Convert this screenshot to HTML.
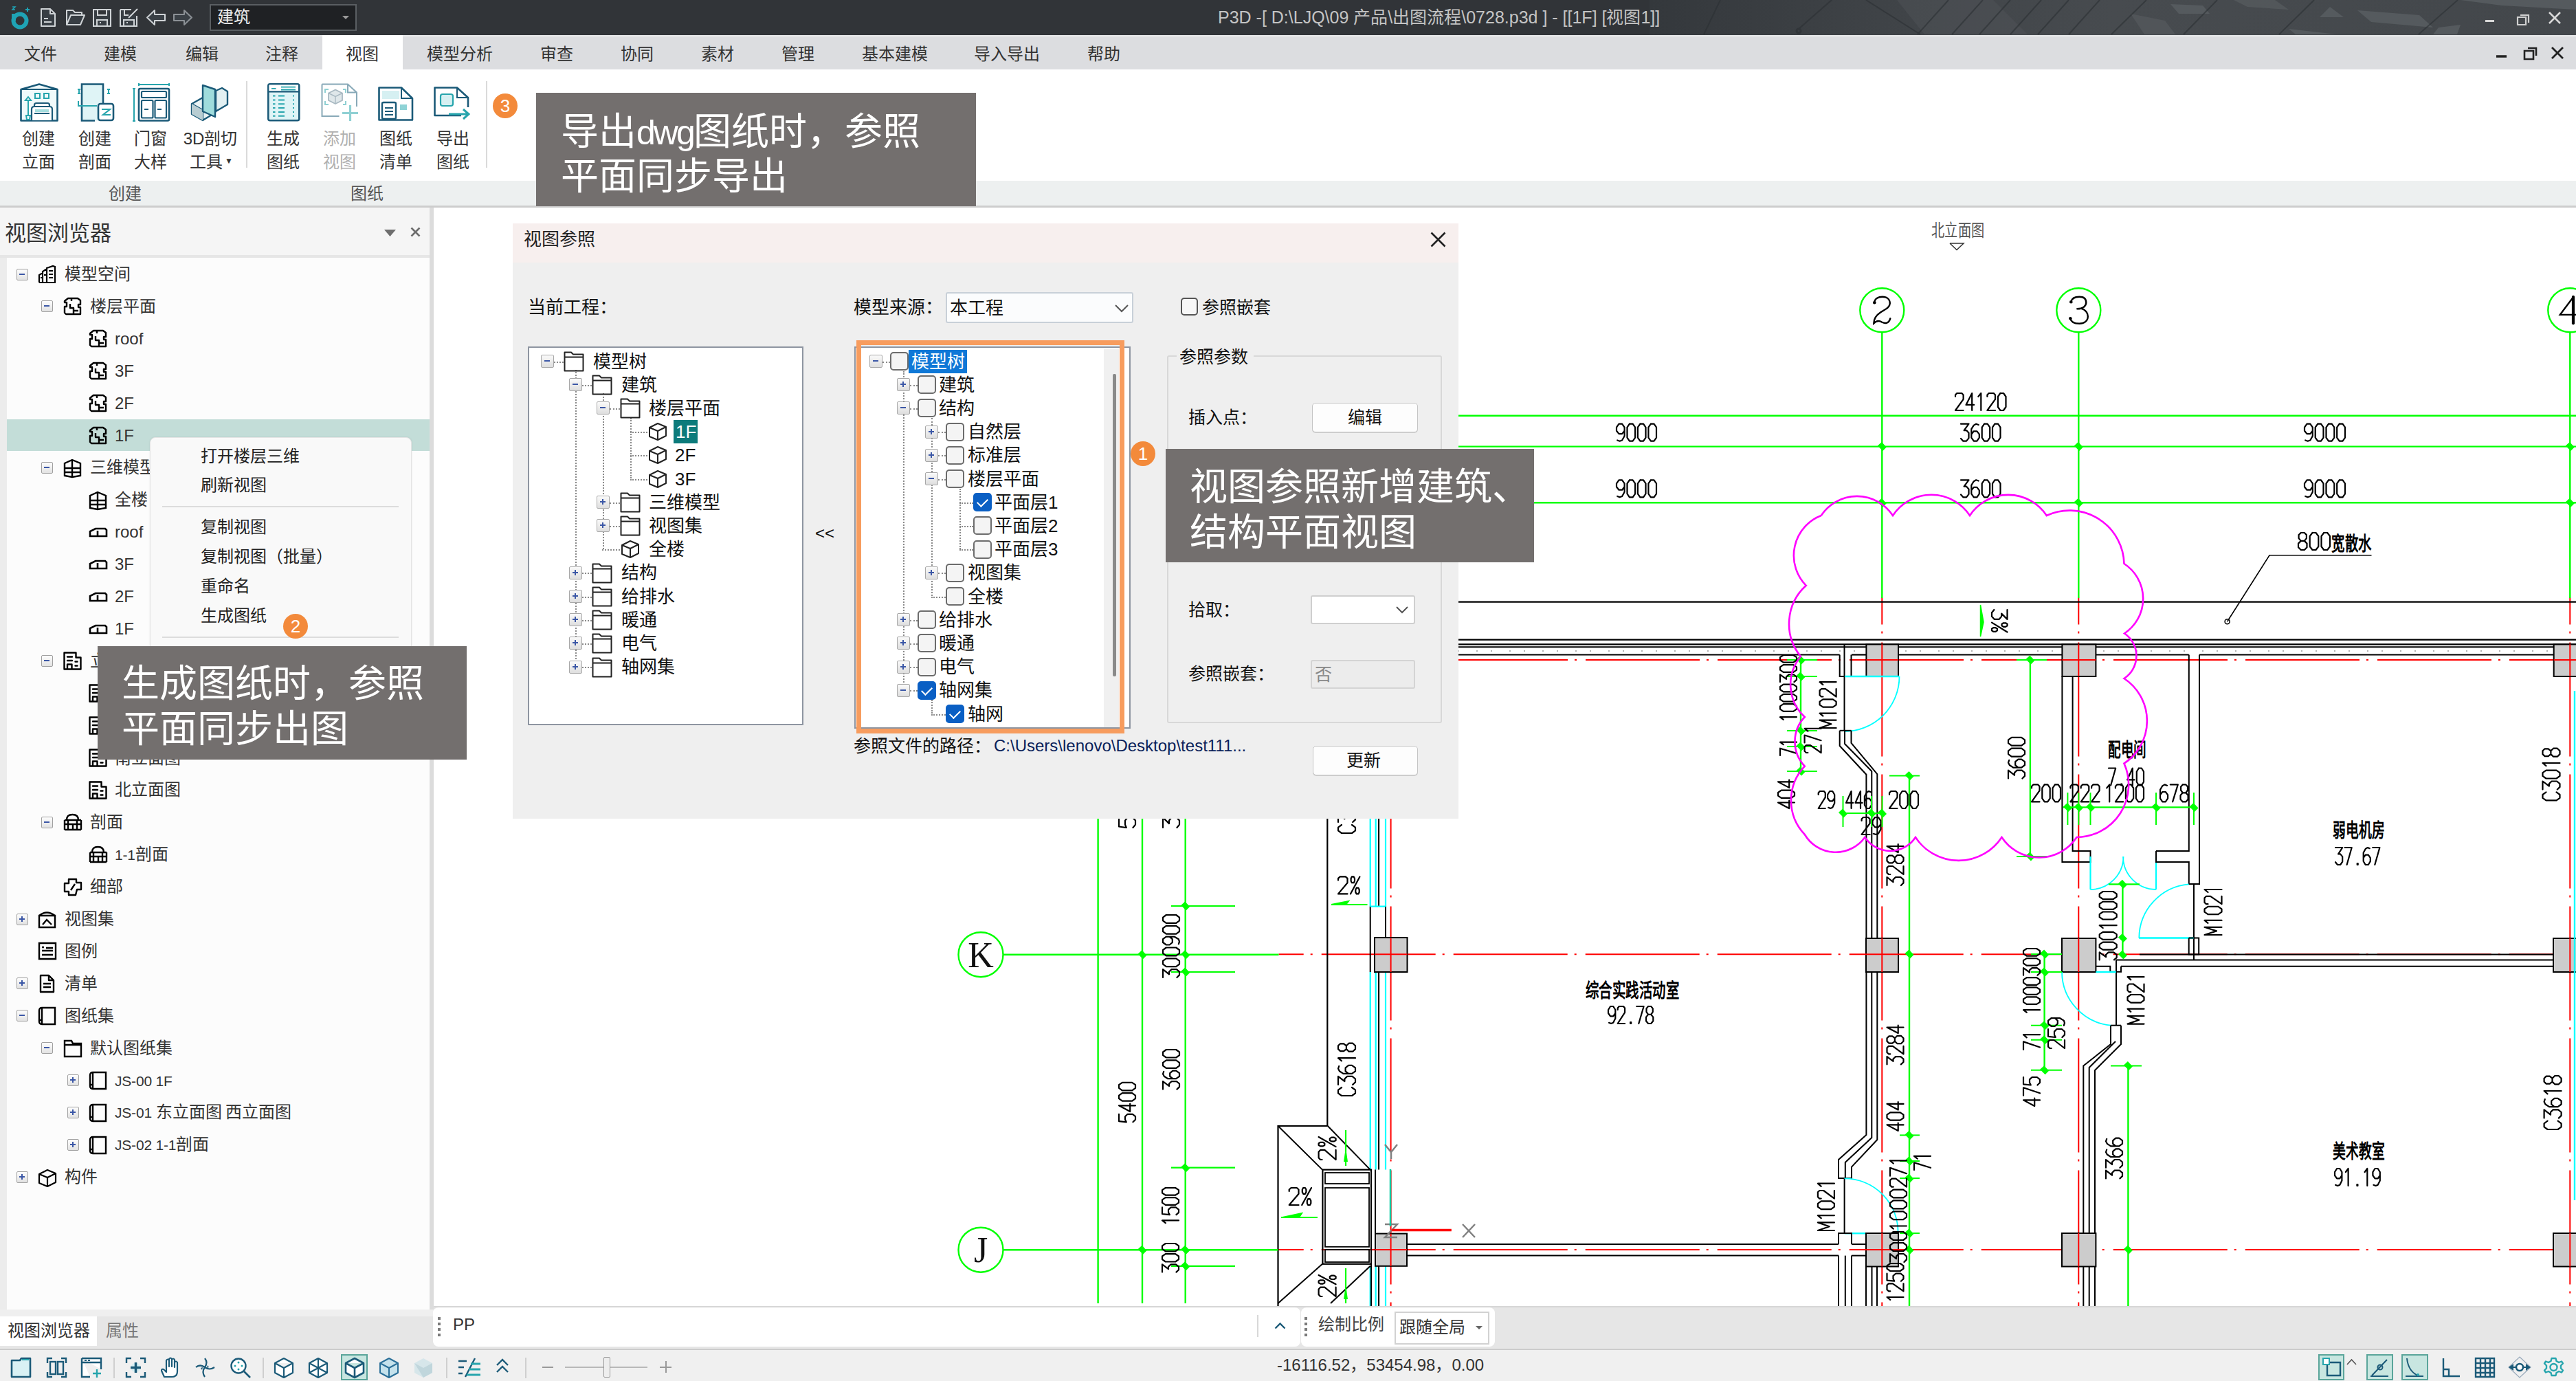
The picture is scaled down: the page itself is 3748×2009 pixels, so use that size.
<!DOCTYPE html>
<html lang="zh-CN"><head><meta charset="utf-8">
<style>
*{margin:0;padding:0;box-sizing:border-box}
html,body{width:3748px;height:2009px;overflow:hidden;background:#fff;font-family:"Liberation Sans",sans-serif;color:#333}
.a{position:absolute;white-space:nowrap}
.mi{position:absolute;font-size:24px;line-height:28px;color:#333}
.rt{position:absolute;font-size:24px;line-height:34px;color:#333;text-align:center}
.gl{position:absolute;top:266px;font-size:24px;line-height:30px;color:#555}
.tr{position:absolute;font-size:24px;line-height:30px;color:#333;white-space:nowrap}
.exp{position:absolute;width:17px;height:17px;border:1.5px solid #a0a0a0;border-radius:2px;background:linear-gradient(#fdfdfd,#e2e2e2)}
.exp:after{content:"";position:absolute;left:3px;top:6px;width:8px;height:2px;background:#3b57a6}
.exp.p:before{content:"";position:absolute;left:6px;top:3px;width:2px;height:8px;background:#3b57a6}
.box{position:absolute;background:#736f6e}
.bl{position:absolute;color:#fff;font-size:55px;line-height:67px;white-space:nowrap}
.badge{position:absolute;width:36px;height:36px;border-radius:18px;background:#f38a3b;color:#fff;font-size:26px;line-height:36px;text-align:center}
svg{position:absolute;overflow:visible}
.cm{position:absolute;font-size:24px;line-height:30px;color:#222;white-space:nowrap}
.dt{position:absolute;font-size:26px;line-height:32px;color:#111;white-space:nowrap;font-weight:500}
.cb{position:absolute;width:27px;height:27px;border:2px solid #6c6c6c;border-radius:5px;background:#f4f4f4}
.cb.on{background:#0a5fc4;border-color:#0a5fc4}
.cb.on:after{content:"";position:absolute;left:7px;top:3px;width:7px;height:13px;border-right:2px solid #fff;border-bottom:2px solid #fff;transform:rotate(45deg)}
.dexp{position:absolute;width:19px;height:19px;border:1.5px solid #a8a8a8;border-radius:2px;background:linear-gradient(#fafafa,#dedede)}
.dexp:after{content:"";position:absolute;left:4px;top:7px;width:8px;height:2px;background:#3b57a6}
.dexp.p:before{content:"";position:absolute;left:7px;top:4px;width:2px;height:8px;background:#3b57a6}
.btn{position:absolute;background:#fdfdfd;border:1.5px solid #c5c5c5;border-radius:5px;box-shadow:0 1px 0 #d0d0d0}
</style></head><body>

<div class="a" style="left:0;top:0;width:3748px;height:51px;background:#313438"></div>
<svg style="left:2400px;top:0" width="1348" height="51" viewBox="2400 0 1348 51">
<defs><linearGradient id="tg" x1="0" x2="1"><stop offset="0" stop-color="#34383c"/><stop offset="0.25" stop-color="#3f4347"/><stop offset="0.5" stop-color="#474b4f"/><stop offset="0.75" stop-color="#45494d"/><stop offset="1" stop-color="#43474b"/></linearGradient></defs>
<rect x="2400" y="0" width="1348" height="51" fill="url(#tg)"/>
<g fill="#555a5e">
<path d="M2760 0 L2900 0 L2950 50 L2800 50Z" opacity="0.35"/>
<path d="M3158 6 L3205 8 L3215 20 L3170 20Z"/>
<path d="M3375 25 L3390 10 L3410 25Z"/>
<path d="M3430 15 L3520 22 L3540 40 L3450 32Z"/>
<path d="M3580 0 L3748 0 L3748 14 L3640 8Z"/>
<path d="M3100 20 L3150 30 L3165 50 L3120 50Z" opacity="0.7"/>
<path d="M3250 0 L3310 0 L3330 14 L3270 10Z" opacity="0.8"/>
<path d="M3548 40 L3580 36 L3575 50 L3540 50Z"/>
<path d="M3330 42 L3400 50 L3340 50Z"/>
</g>
<g stroke="#2c3034" stroke-width="2" fill="none" opacity="0.6">
<path d="M2479 50 L2503 0 M2617 42 L2665 0 M2715 0 L2794 50 M2790 50 L2835 0 M2840 50 L2885 0 M2880 50 L2925 0 M2925 50 L2970 0 M2965 50 L3010 0 M3010 50 L3055 0 M3072 50 L3123 0 M3177 50 L3226 0 M3316 50 L3367 0 M3519 50 L3576 0"/>
<path d="M2617 42 a3 3 0 1 0 0.1 0" stroke-width="3"/>
</g>
</svg>
<!-- logo -->
<svg style="left:16px;top:8px" width="30" height="34" viewBox="0 0 30 34">
<circle cx="13" cy="22" r="9.5" fill="none" stroke="#1fa3b5" stroke-width="6"/>
<path d="M4 12 L4 22" stroke="#1fa3b5" stroke-width="6"/>
<path d="M2 2 h4 l-4 4 h4" stroke="#1fa3b5" stroke-width="1.5" fill="none"/>
<path d="M24 3 v6 M21 6 h6" stroke="#1fa3b5" stroke-width="2"/>
</svg>
<g></g>
<svg style="left:58px;top:11px" width="24" height="29" viewBox="0 0 24 29"><path d="M2 2 h13 l7 7 v18 h-20z M15 2 v7 h7 M6 16 h6 M6 21 h11" fill="#383e44" stroke="#cfd3d6" stroke-width="2" stroke-linejoin="round"/></svg>
<svg style="left:95px;top:13px" width="29" height="25" viewBox="0 0 29 25"><path d="M2 2 h9 l3 3 h10 v4 H8 l-6 14z M2 23 l6 -14 h20 l-6 14z" fill="#383e44" stroke="#cfd3d6" stroke-width="2" stroke-linejoin="round"/></svg>
<svg style="left:134px;top:12px" width="29" height="28" viewBox="0 0 29 28"><path d="M2 2 h25 v24 h-25z M8 2 v8 h13 v-8 M7 26 v-9 h15 v9 M11 21 h2" fill="#383e44" stroke="#cfd3d6" stroke-width="2"/></svg>
<svg style="left:173px;top:11px" width="30" height="29" viewBox="0 0 30 29"><path d="M2 3 h16 M26 12 v15 h-24 v-24 M8 3 v8 h6 M7 27 v-9 h15 v9 M11 22 h2 M14 15 l13 -13" fill="#383e44" stroke="#cfd3d6" stroke-width="2"/></svg>
<svg style="left:212px;top:13px" width="30" height="25" viewBox="0 0 30 25"><path d="M2 12.5 L13 2 v6 h15 v9 h-15 v6z" fill="#3a4046" stroke="#cfd3d6" stroke-width="2" stroke-linejoin="round"/></svg>
<svg style="left:251px;top:13px" width="30" height="25" viewBox="0 0 30 25"><path d="M28 12.5 L17 2 v6 h-15 v9 h15 v6z" fill="#3a4046" stroke="#8c9196" stroke-width="2" stroke-linejoin="round"/></svg>
<div class="a" style="left:305px;top:6px;width:214px;height:39px;background:#1f2124;border:2px solid #5a5e62"></div>
<div class="a" style="left:316px;top:9px;font-size:24px;line-height:32px;color:#eee">建筑</div>
<svg style="left:498px;top:23px" width="10" height="6"><path d="M0 0 h10 l-5 5z" fill="#9a9a9a"/></svg>
<div class="a" style="left:1772px;top:9px;font-size:25px;line-height:32px;color:#c4c4c4">P3D -[ D:\LJQ\09 产品\出图流程\0728.p3d ] - [[1F] [视图1]]</div>
<svg style="left:3610px;top:14px" width="130" height="24" viewBox="0 0 130 24">
<path d="M6 16.5 h13" stroke="#d8d8d8" stroke-width="3"/>
<path d="M57 8 h12 v11 M53 11 h12 v11 h-12z" stroke="#d0d0d0" stroke-width="2.2" fill="none"/>
<path d="M99 4 l16 16 M115 4 l-16 16" stroke="#d8d8d8" stroke-width="2.5"/>
</svg>

<div class="a" style="left:0;top:51px;width:3748px;height:50px;background:#dcdde0"></div>
<div class="a" style="left:0;top:51px;width:3748px;height:2.5px;background:#e3e4e6"></div>
<div class="a" style="left:469px;top:51px;width:117px;height:50px;background:#fff"></div>
<svg style="left:3625px;top:64px" width="120" height="26" viewBox="0 0 120 26">
<path d="M7 18 h15" stroke="#222" stroke-width="3.5"/>
<path d="M53 6 h12 v11 M48 10 h13 v12 h-13z" stroke="#222" stroke-width="2.6" fill="none"/>
<path d="M88 5 l16 16 M104 5 l-16 16" stroke="#222" stroke-width="2.8"/>
</svg>

<div class="mi" style="left:35px;top:65px">文件</div>
<div class="mi" style="left:151px;top:65px">建模</div>
<div class="mi" style="left:270px;top:65px">编辑</div>
<div class="mi" style="left:386px;top:65px">注释</div>
<div class="mi" style="left:503px;top:65px">视图</div>
<div class="mi" style="left:621px;top:65px">模型分析</div>
<div class="mi" style="left:786px;top:65px">审查</div>
<div class="mi" style="left:903px;top:65px">协同</div>
<div class="mi" style="left:1020px;top:65px">素材</div>
<div class="mi" style="left:1137px;top:65px">管理</div>
<div class="mi" style="left:1254px;top:65px">基本建模</div>
<div class="mi" style="left:1417px;top:65px">导入导出</div>
<div class="mi" style="left:1582px;top:65px">帮助</div>

<div class="a" style="left:0;top:101px;width:3748px;height:163px;background:#fff"></div>
<div class="a" style="left:0;top:263px;width:3748px;height:36px;background:#edf0f0"></div>
<div class="a" style="left:0;top:299px;width:3748px;height:3px;background:#cdcdcd"></div>
<div class="gl" style="left:158px;top:267px">创建</div>
<div class="gl" style="left:510px;top:267px">图纸</div>
<div class="a" style="left:358px;top:118px;width:2px;height:126px;background:#dadada"></div>
<div class="a" style="left:707px;top:118px;width:2px;height:126px;background:#dadada"></div>
<!-- icon1 elevation -->
<svg style="left:29px;top:121px" width="56" height="56" viewBox="0 0 56 56">
<path d="M1.5 9 L28 1.5 L54.5 9 V54.5 H1.5Z" fill="#f0fafb" stroke="#1b5a78" stroke-width="2.6" stroke-linejoin="round"/>
<path d="M1.5 9 H54.5" stroke="#1b5a78" stroke-width="2"/>
<rect x="22" y="15" width="7" height="7" fill="none" stroke="#27a5ad" stroke-width="2"/>
<rect x="35" y="15" width="7" height="7" fill="none" stroke="#27a5ad" stroke-width="2"/>
<path d="M8 25 h8 l-4 -5z M12 25 v22 M9 47 h6 l-1 6 h-4z" fill="none" stroke="#27a5ad" stroke-width="2"/>
<path d="M17 54 V38 q0 -4 4 -4 h22 q4 0 4 4 V54 M21 34 v-2 q0 -3 3 -3 h16 q3 0 3 3 v2 M21 44 h22" fill="#fff" stroke="#1b5a78" stroke-width="2.2"/>
<rect x="22" y="38" width="20" height="4" fill="#a6dede"/>
</svg>
<!-- icon2 section -->
<svg style="left:111px;top:121px" width="56" height="56" viewBox="0 0 56 56">
<rect x="8" y="1.5" width="30" height="53" fill="#dff4f6" stroke="none"/>
<path d="M39 29 V1.5 H8 V54.5 H27" fill="none" stroke="#1b5a78" stroke-width="2.6"/>
<path d="M2 9 h4 M4 9 v6 M2 15 h4 M45 9 h4 M47 9 v6 M45 15 h4 M3 26 v7 h27" fill="none" stroke="#27a5ad" stroke-width="2"/>
<rect x="32" y="30" width="22" height="24" rx="3" fill="#fff" stroke="#1b5a78" stroke-width="2.6"/>
<path d="M37 38 h12 l-10 8 h11" fill="none" stroke="#27a5ad" stroke-width="2.2"/>
</svg>
<!-- icon3 door window -->
<svg style="left:193px;top:121px" width="54" height="56" viewBox="0 0 54 56">
<path d="M9 2 h44 M9 0 v4 M53 0 v4 M2 8 v47 M0 8 h4 M0 55 h4" stroke="#27a5ad" stroke-width="2"/>
<rect x="9" y="8" width="44" height="46.5" rx="2" fill="#fff" stroke="#1b5a78" stroke-width="2.6"/>
<rect x="13" y="12" width="36" height="9" rx="1.5" fill="none" stroke="#1b5a78" stroke-width="2.2"/>
<rect x="13" y="25" width="16.5" height="25.5" rx="1.5" fill="none" stroke="#1b5a78" stroke-width="2.2"/>
<rect x="32.5" y="25" width="16.5" height="25.5" rx="1.5" fill="none" stroke="#1b5a78" stroke-width="2.2"/>
<path d="M17 38 h6 M36 38 h6" stroke="#1b5a78" stroke-width="2"/>
</svg>
<!-- icon4 3d cut -->
<svg style="left:277px;top:122px" width="56" height="56" viewBox="0 0 56 56">
<path d="M2 29 L18 20 L36 30 L36 42 L18 53 L2 44Z" fill="#e9f3f4" stroke="#1b5a78" stroke-width="2.4" stroke-linejoin="round"/>
<path d="M2 29 L18 38 L36 30 M18 38 V53" fill="none" stroke="#1b5a78" stroke-width="2.2"/>
<path d="M2 29 L18 38 L18 53 L2 44Z" fill="#b8cdd2"/>
<path d="M18 2 L36 8 V48 L18 40Z" fill="#9fdcdc" stroke="#1b5a78" stroke-width="2.4" stroke-linejoin="round"/>
<path d="M37 10 L46 6 L54 11 V30 L37 40Z" fill="#e2f0f2" stroke="#1b5a78" stroke-width="2.4" stroke-linejoin="round"/>
</svg>
<!-- icon5 generate sheet -->
<svg style="left:389px;top:121px" width="48" height="56" viewBox="389 121 48 56">
<rect x="390.3" y="122.3" width="45" height="53" rx="2.5" fill="#dff4f6" stroke="#1b5a78" stroke-width="2.6"/>
<rect x="391.6" y="123.6" width="42.4" height="9" fill="#fff"/>
<path d="M390.3 133.4 H435.3" stroke="#1b5a78" stroke-width="2.2"/>
<path d="M395 128.9 h6.5 M409 126.6 h21 M409 130.5 h21" stroke="#27a5ad" stroke-width="1.8"/>
<g stroke="#27a5ad" stroke-width="2">
<path d="M397 139.6 h3.5 M405 139.6 h9 M426 139.6 h2 M397 145.5 h3.5 M405 145.5 h9 M426 145.5 h2 M397 151.2 h3.5 M405 151.2 h9 M426 151.2 h2 M397 157.1 h3.5 M405 157.1 h9 M426 157.1 h2 M397 162.9 h3.5 M405 162.9 h9 M426 162.9 h2 M397 168.8 h3.5 M405 168.8 h9 M426 168.8 h2"/>
</g>
</svg>
<!-- icon6 add view disabled -->
<svg style="left:467px;top:121px" width="58" height="56" viewBox="467 121 58 56">
<path d="M494 190 M495 189" />
<path d="M468.5 122.5 H506 L519 134.5 V155 M493.5 169 H468.5 V122.5 M506 122.5 V134.5 H519" fill="#fff" stroke="#88a9b8" stroke-width="2"/>
<path d="M473 135 V130 H478 M499 130 H503 V135 M473 147 V152 H478 M499 152 H503 V147" fill="none" stroke="#8fd0d3" stroke-width="2"/>
<path d="M478 135.5 L488 130.5 L498 135.5 V146 L488 151 L478 146Z" fill="#dfe7ea" stroke="#a9b9c2" stroke-width="1.8"/>
<path d="M478 135.5 L488 140.5 L498 135.5 M488 140.5 V151" fill="none" stroke="#a9b9c2" stroke-width="1.4"/>
<path d="M509.5 153 v23 M498 164.5 h23" stroke="#8fd0d3" stroke-width="3.2"/>
</svg>
<!-- icon7 sheet list -->
<svg style="left:550px;top:126px" width="52" height="50" viewBox="0 0 52 50">
<path d="M1.5 1.5 H34 L50 17 V48.5 H1.5Z" fill="#fff" stroke="#1b5a78" stroke-width="2.6" stroke-linejoin="round"/>
<path d="M34 1.5 V17 H50" fill="none" stroke="#1b5a78" stroke-width="2"/>
<rect x="6" y="6" width="25" height="12" fill="#d6f0f2"/>
<rect x="6" y="23" width="20" height="24" rx="2" fill="#fff" stroke="#1b5a78" stroke-width="2.4"/>
<path d="M10 31 h12 M10 36 h12 M10 41 h12" stroke="#1b5a78" stroke-width="2"/>
<rect x="32" y="26" width="10" height="8" fill="#8fd3d6"/>
</svg>
<!-- icon8 export sheet -->
<svg style="left:631px;top:126px" width="56" height="50" viewBox="0 0 56 50">
<path d="M40 42 H1.5 V1.5 H34 L50 16 V30" fill="#fff" stroke="#1b5a78" stroke-width="2.6" stroke-linejoin="round"/>
<path d="M34 1.5 V16 H50" fill="none" stroke="#1b5a78" stroke-width="2"/>
<rect x="10" y="11" width="18" height="17" rx="3" fill="#d6f0f2" stroke="#27a5ad" stroke-width="2.2"/>
<path d="M22 40 H50 M43 33 L51 40 L43 47" fill="none" stroke="#27a5ad" stroke-width="3"/>
</svg>

<div class="rt" style="left:16px;top:185px;width:80px;">创建</div>
<div class="rt" style="left:16px;top:219px;width:80px;">立面</div>
<div class="rt" style="left:98px;top:185px;width:80px;">创建</div>
<div class="rt" style="left:98px;top:219px;width:80px;">剖面</div>
<div class="rt" style="left:179px;top:185px;width:80px;">门窗</div>
<div class="rt" style="left:179px;top:219px;width:80px;">大样</div>
<div class="rt" style="left:260px;top:185px;width:92px;">3D剖切</div>
<div class="rt" style="left:260px;top:219px;width:92px;">工具<span style="font-size:12px;position:relative;top:-6px;left:3px">▼</span></div>
<div class="rt" style="left:372px;top:185px;width:80px;">生成</div>
<div class="rt" style="left:372px;top:219px;width:80px;">图纸</div>
<div class="rt" style="left:454px;top:185px;width:80px;color:#b0b0b0;">添加</div>
<div class="rt" style="left:454px;top:219px;width:80px;color:#b0b0b0;">视图</div>
<div class="rt" style="left:536px;top:185px;width:80px;">图纸</div>
<div class="rt" style="left:536px;top:219px;width:80px;">清单</div>
<div class="rt" style="left:619px;top:185px;width:80px;">导出</div>
<div class="rt" style="left:619px;top:219px;width:80px;">图纸</div>

<div class="a" style="left:0;top:302px;width:625px;height:1603px;background:#f5f5f5"></div>
<div class="a" style="left:0;top:371px;width:625px;height:4px;background:#e6e6e6"></div>
<div class="a" style="left:7px;top:320px;font-size:31px;line-height:40px;color:#333">视图浏览器</div>
<svg style="left:559px;top:334px" width="18" height="11"><path d="M0 0 h17 l-8.5 10z" fill="#6e6e6e"/></svg>
<svg style="left:597px;top:330px" width="16" height="15"><path d="M1.5 1.5 l12 12 M13.5 1.5 l-12 12" stroke="#6e6e6e" stroke-width="2.6"/></svg>
<div class="a" style="left:0;top:375px;width:10px;height:1530px;background:#ececec"></div>
<div class="a" style="left:10px;top:375px;width:615px;height:1530px;background:#fcfcfc"></div>
<div class="a" style="left:625px;top:302px;width:6px;height:1603px;background:#dcdcdc"></div>
<div class="a" style="left:10px;top:610px;width:615px;height:46px;background:#c3ddd8"></div>

<div class="exp" style="left:24px;top:390.5px"></div>
<svg style="left:55px;top:385.5px" width="27" height="27" viewBox="0 0 27 27"><path d="M2 25 V14 L7 11 V25 M7 25 V9 L13 5 V25 M13 25 V4 L22 1 L25 2 V25 M2 25 H26 M16 8 h6 M16 13 h6 M16 18 h6 M4 18 h2 M9 14 h3" fill="none" stroke="#000" stroke-width="2.2"/></svg>
<div class="tr" style="left:94px;top:384.0px;color:#333">模型空间</div>
<div class="exp" style="left:60px;top:437.4px"></div>
<svg style="left:92px;top:432.4px" width="27" height="27" viewBox="0 0 27 27"><path d="M7 2 H21 L25 5 V11 H22 V15 H25 V25 H4 L2 23 V14 H5 V8 H2 V6 Z M10 10 v6 h5 v9 M12 2 v4 M22 20 h-6" fill="none" stroke="#000" stroke-width="2.4" stroke-linejoin="round"/></svg>
<div class="tr" style="left:131px;top:430.9px;color:#333">楼层平面</div>
<svg style="left:129px;top:479.3px" width="27" height="27" viewBox="0 0 27 27"><path d="M7 2 H21 L25 5 V11 H22 V15 H25 V25 H4 L2 23 V14 H5 V8 H2 V6 Z M10 10 v6 h5 v9 M12 2 v4 M22 20 h-6" fill="none" stroke="#000" stroke-width="2.4" stroke-linejoin="round"/></svg>
<div class="tr" style="left:167px;top:477.8px;color:#333">roof</div>
<svg style="left:129px;top:526.2px" width="27" height="27" viewBox="0 0 27 27"><path d="M7 2 H21 L25 5 V11 H22 V15 H25 V25 H4 L2 23 V14 H5 V8 H2 V6 Z M10 10 v6 h5 v9 M12 2 v4 M22 20 h-6" fill="none" stroke="#000" stroke-width="2.4" stroke-linejoin="round"/></svg>
<div class="tr" style="left:167px;top:524.7px;color:#333">3F</div>
<svg style="left:129px;top:573.1px" width="27" height="27" viewBox="0 0 27 27"><path d="M7 2 H21 L25 5 V11 H22 V15 H25 V25 H4 L2 23 V14 H5 V8 H2 V6 Z M10 10 v6 h5 v9 M12 2 v4 M22 20 h-6" fill="none" stroke="#000" stroke-width="2.4" stroke-linejoin="round"/></svg>
<div class="tr" style="left:167px;top:571.6px;color:#333">2F</div>
<svg style="left:129px;top:620.0px" width="27" height="27" viewBox="0 0 27 27"><path d="M7 2 H21 L25 5 V11 H22 V15 H25 V25 H4 L2 23 V14 H5 V8 H2 V6 Z M10 10 v6 h5 v9 M12 2 v4 M22 20 h-6" fill="none" stroke="#000" stroke-width="2.4" stroke-linejoin="round"/></svg>
<div class="tr" style="left:167px;top:618.5px;color:#333">1F</div>
<div class="exp" style="left:60px;top:671.9px"></div>
<svg style="left:92px;top:666.9px" width="27" height="27" viewBox="0 0 27 27"><path d="M2 7 L13 2 L25 7 V25 L13 27 L2 25 Z M2 14 H25 M13 2 V27 M2 20 H25" fill="none" stroke="#000" stroke-width="2.4"/></svg>
<div class="tr" style="left:131px;top:665.4px;color:#333">三维模型</div>
<svg style="left:129px;top:713.8px" width="27" height="27" viewBox="0 0 27 27"><path d="M2 7 L13 2 L25 7 V25 L13 27 L2 25 Z M2 14 H25 M13 2 V27 M2 20 H25" fill="none" stroke="#000" stroke-width="2.4"/></svg>
<div class="tr" style="left:167px;top:712.3px;color:#333">全楼</div>
<svg style="left:129px;top:767.2px" width="27" height="14" viewBox="0 0 27 14"><path d="M2 13 V6 L10 2 H24 L26 4 V13 Z M2 13 H26 M13 5 V13" fill="none" stroke="#000" stroke-width="2.6"/></svg>
<div class="tr" style="left:167px;top:759.2px;color:#333">roof</div>
<svg style="left:129px;top:814.1px" width="27" height="14" viewBox="0 0 27 14"><path d="M2 13 V6 L10 2 H24 L26 4 V13 Z M2 13 H26 M13 5 V13" fill="none" stroke="#000" stroke-width="2.6"/></svg>
<div class="tr" style="left:167px;top:806.1px;color:#333">3F</div>
<svg style="left:129px;top:861.0px" width="27" height="14" viewBox="0 0 27 14"><path d="M2 13 V6 L10 2 H24 L26 4 V13 Z M2 13 H26 M13 5 V13" fill="none" stroke="#000" stroke-width="2.6"/></svg>
<div class="tr" style="left:167px;top:853.0px;color:#333">2F</div>
<svg style="left:129px;top:907.9px" width="27" height="14" viewBox="0 0 27 14"><path d="M2 13 V6 L10 2 H24 L26 4 V13 Z M2 13 H26 M13 5 V13" fill="none" stroke="#000" stroke-width="2.6"/></svg>
<div class="tr" style="left:167px;top:899.9px;color:#333">1F</div>
<div class="exp" style="left:60px;top:953.3px"></div>
<svg style="left:92px;top:948.3px" width="27" height="27" viewBox="0 0 27 27"><path d="M1.5 1.5 H18.5 V8.5 H25.5 V25.5 H1.5 Z M6 25.5 V18.5 H12.5 V25.5" fill="none" stroke="#000" stroke-width="2.4" stroke-linejoin="round"/><path d="M6 7.5 H13 M6 13 H13 M17.5 14.5 H20.5 M17.5 20.5 H20.5" stroke="#000" stroke-width="2.4" stroke-linecap="round"/></svg>
<div class="tr" style="left:131px;top:946.8px;color:#333">立面</div>
<svg style="left:129px;top:995.2px" width="27" height="27" viewBox="0 0 27 27"><path d="M1.5 1.5 H18.5 V8.5 H25.5 V25.5 H1.5 Z M6 25.5 V18.5 H12.5 V25.5" fill="none" stroke="#000" stroke-width="2.4" stroke-linejoin="round"/><path d="M6 7.5 H13 M6 13 H13 M17.5 14.5 H20.5 M17.5 20.5 H20.5" stroke="#000" stroke-width="2.4" stroke-linecap="round"/></svg>
<div class="tr" style="left:167px;top:993.7px;color:#333">东立面图</div>
<svg style="left:129px;top:1042.1px" width="27" height="27" viewBox="0 0 27 27"><path d="M1.5 1.5 H18.5 V8.5 H25.5 V25.5 H1.5 Z M6 25.5 V18.5 H12.5 V25.5" fill="none" stroke="#000" stroke-width="2.4" stroke-linejoin="round"/><path d="M6 7.5 H13 M6 13 H13 M17.5 14.5 H20.5 M17.5 20.5 H20.5" stroke="#000" stroke-width="2.4" stroke-linecap="round"/></svg>
<div class="tr" style="left:167px;top:1040.6px;color:#333">西立面图</div>
<svg style="left:129px;top:1089.0px" width="27" height="27" viewBox="0 0 27 27"><path d="M1.5 1.5 H18.5 V8.5 H25.5 V25.5 H1.5 Z M6 25.5 V18.5 H12.5 V25.5" fill="none" stroke="#000" stroke-width="2.4" stroke-linejoin="round"/><path d="M6 7.5 H13 M6 13 H13 M17.5 14.5 H20.5 M17.5 20.5 H20.5" stroke="#000" stroke-width="2.4" stroke-linecap="round"/></svg>
<div class="tr" style="left:167px;top:1087.5px;color:#333">南立面图</div>
<svg style="left:129px;top:1135.9px" width="27" height="27" viewBox="0 0 27 27"><path d="M1.5 1.5 H18.5 V8.5 H25.5 V25.5 H1.5 Z M6 25.5 V18.5 H12.5 V25.5" fill="none" stroke="#000" stroke-width="2.4" stroke-linejoin="round"/><path d="M6 7.5 H13 M6 13 H13 M17.5 14.5 H20.5 M17.5 20.5 H20.5" stroke="#000" stroke-width="2.4" stroke-linecap="round"/></svg>
<div class="tr" style="left:167px;top:1134.4px;color:#333">北立面图</div>
<div class="exp" style="left:60px;top:1187.8px"></div>
<svg style="left:92px;top:1182.8px" width="27" height="27" viewBox="0 0 27 27"><path d="M5 10 Q5 2 13.5 2 Q22 2 22 10 M2 10 H26 M2 16 H26 M2 24 H26 M7 10 V24 M14 16 V24 M20 10 V24 M2 10 V24 M26 10 V24" fill="none" stroke="#000" stroke-width="2.4"/></svg>
<div class="tr" style="left:131px;top:1181.3px;color:#333">剖面</div>
<svg style="left:129px;top:1229.7px" width="27" height="27" viewBox="0 0 27 27"><path d="M5 10 Q5 2 13.5 2 Q22 2 22 10 M2 10 H26 M2 16 H26 M2 24 H26 M7 10 V24 M14 16 V24 M20 10 V24 M2 10 V24 M26 10 V24" fill="none" stroke="#000" stroke-width="2.4"/></svg>
<div class="tr" style="left:167px;top:1228.2px;color:#333"><span style="font-size:21px;letter-spacing:-0.2px">1-1</span>剖面</div>
<svg style="left:92px;top:1276.6px" width="27" height="27" viewBox="0 0 27 27"><path d="M8 2 H19 V7 H26 V17 L20 17 L18 25 H8 V20 H2 V8 H8 Z M11 18 L17 9" fill="none" stroke="#000" stroke-width="2.4" stroke-linejoin="round"/></svg>
<div class="tr" style="left:131px;top:1275.1px;color:#333">细部</div>
<div class="exp p" style="left:24px;top:1328.5px"></div>
<svg style="left:55px;top:1323.5px" width="27" height="27" viewBox="0 0 27 27"><path d="M2 8 Q13 -1 25 8 M2 8 H25 V25 H2 Z M7 21 L13 14 L20 21" fill="none" stroke="#000" stroke-width="2.4"/></svg>
<div class="tr" style="left:94px;top:1322.0px;color:#333">视图集</div>
<svg style="left:55px;top:1370.4px" width="27" height="27" viewBox="0 0 27 27"><path d="M2 2 H26 V25 H2 Z M6 8 H9 M12 9 H22 M6 13 H22 M6 19 H22" fill="none" stroke="#000" stroke-width="2.4"/></svg>
<div class="tr" style="left:94px;top:1368.9px;color:#333">图例</div>
<div class="exp p" style="left:24px;top:1422.3px"></div>
<svg style="left:55px;top:1417.3px" width="27" height="27" viewBox="0 0 27 27"><path d="M4 2 H16 L23 9 V26 H4 Z M16 2 V9 H23 M8 14 H19 M8 19 H19" fill="none" stroke="#000" stroke-width="2.4" stroke-linejoin="round"/></svg>
<div class="tr" style="left:94px;top:1415.8px;color:#333">清单</div>
<div class="exp" style="left:24px;top:1469.2px"></div>
<svg style="left:55px;top:1464.2px" width="27" height="27" viewBox="0 0 27 27"><path d="M6 2 H25 V26 H6 Q2 26 2 22 V6 Q2 2 6 2 Z M6 2 V26 M2 20 H6" fill="none" stroke="#000" stroke-width="2.4"/></svg>
<div class="tr" style="left:94px;top:1462.7px;color:#333">图纸集</div>
<div class="exp" style="left:60px;top:1516.1px"></div>
<svg style="left:92px;top:1511.1px" width="27" height="27" viewBox="0 0 27 27"><path d="M2 3 H12 L14 7 H26 V26 H2 Z M2 9 H26" fill="none" stroke="#000" stroke-width="2.4"/></svg>
<div class="tr" style="left:131px;top:1509.6px;color:#333">默认图纸集</div>
<div class="exp p" style="left:98px;top:1563.0px"></div>
<svg style="left:129px;top:1558.0px" width="27" height="27" viewBox="0 0 27 27"><path d="M6 2 H25 V26 H6 Q2 26 2 22 V6 Q2 2 6 2 Z M6 2 V26 M2 20 H6" fill="none" stroke="#000" stroke-width="2.4"/></svg>
<div class="tr" style="left:167px;top:1556.5px;color:#333"><span style="font-size:21px;letter-spacing:-0.2px">JS-00 1F</span></div>
<div class="exp p" style="left:98px;top:1609.9px"></div>
<svg style="left:129px;top:1604.9px" width="27" height="27" viewBox="0 0 27 27"><path d="M6 2 H25 V26 H6 Q2 26 2 22 V6 Q2 2 6 2 Z M6 2 V26 M2 20 H6" fill="none" stroke="#000" stroke-width="2.4"/></svg>
<div class="tr" style="left:167px;top:1603.4px;color:#333"><span style="font-size:21px;letter-spacing:-0.2px">JS-01 </span>东立面图<span style="font-size:21px;letter-spacing:-0.2px"> </span>西立面图</div>
<div class="exp p" style="left:98px;top:1656.8px"></div>
<svg style="left:129px;top:1651.8px" width="27" height="27" viewBox="0 0 27 27"><path d="M6 2 H25 V26 H6 Q2 26 2 22 V6 Q2 2 6 2 Z M6 2 V26 M2 20 H6" fill="none" stroke="#000" stroke-width="2.4"/></svg>
<div class="tr" style="left:167px;top:1650.3px;color:#333"><span style="font-size:21px;letter-spacing:-0.2px">JS-02 1-1</span>剖面</div>
<div class="exp p" style="left:24px;top:1703.7px"></div>
<svg style="left:55px;top:1698.7px" width="27" height="27" viewBox="0 0 27 27"><path d="M2 9 L14 3 L26 8 V21 L14 27 L2 22 Z M2 9 L14 14 L26 8 M14 14 V27" fill="none" stroke="#000" stroke-width="2.2" stroke-linejoin="round"/></svg>
<div class="tr" style="left:94px;top:1697.2px;color:#333">构件</div>

<div class="a" style="left:218px;top:636px;width:381px;height:320px;background:#f9f9f9;border:1px solid #e4e4e4;border-radius:8px;box-shadow:0 0 3px rgba(0,0,0,0.08)"></div>
<div class="a" style="left:236px;top:736px;width:344px;height:2px;background:#dcdcdc"></div>
<div class="a" style="left:236px;top:926px;width:344px;height:2px;background:#dcdcdc"></div>

<div class="cm" style="left:292px;top:649px">打开楼层三维</div>
<div class="cm" style="left:292px;top:691px">刷新视图</div>
<div class="cm" style="left:292px;top:752px">复制视图</div>
<div class="cm" style="left:292px;top:795px">复制视图（批量）</div>
<div class="cm" style="left:292px;top:838px">重命名</div>
<div class="cm" style="left:292px;top:881px">生成图纸</div>
<div class="a" style="left:631px;top:302px;width:3117px;height:1599px;background:#fff"></div>
<svg style="left:0;top:0" width="3748" height="2009" viewBox="0 0 3748 2009" font-family="Liberation Sans, sans-serif"><defs><clipPath id="cv"><rect x="631" y="302" width="3117" height="1599"/></clipPath></defs><g clip-path="url(#cv)"><line x1="2100" y1="604.7" x2="3748" y2="604.7" stroke="#00ff00" stroke-width="2.4"/><line x1="2100" y1="649.6" x2="3748" y2="649.6" stroke="#00ff00" stroke-width="2.4"/><line x1="2100" y1="731.3" x2="3748" y2="731.3" stroke="#00ff00" stroke-width="2.4"/><line x1="2738.3" y1="483" x2="2738.3" y2="870" stroke="#00ff00" stroke-width="2.4"/><line x1="2738.3" y1="870" x2="2738.3" y2="1901" stroke="#ff0000" stroke-width="2" stroke-dasharray="166 10 3 13" stroke-dashoffset="127.4"/><path d="M2737.8,643.1 L2744.8,650.6 L2739.3,656.1 L2731.8,648.6Z" fill="#00ff00"/><path d="M2737.8,724.8 L2744.8,732.3 L2739.3,737.8 L2731.8,730.3Z" fill="#00ff00"/><line x1="3024.3" y1="483" x2="3024.3" y2="870" stroke="#00ff00" stroke-width="2.4"/><line x1="3024.3" y1="870" x2="3024.3" y2="1901" stroke="#ff0000" stroke-width="2" stroke-dasharray="166 10 3 13" stroke-dashoffset="127.4"/><path d="M3023.8,643.1 L3030.8,650.6 L3025.3,656.1 L3017.8,648.6Z" fill="#00ff00"/><path d="M3023.8,724.8 L3030.8,732.3 L3025.3,737.8 L3017.8,730.3Z" fill="#00ff00"/><line x1="3739.3" y1="483" x2="3739.3" y2="870" stroke="#00ff00" stroke-width="2.4"/><line x1="3739.3" y1="870" x2="3739.3" y2="1901" stroke="#ff0000" stroke-width="2" stroke-dasharray="166 10 3 13" stroke-dashoffset="127.4"/><path d="M3738.8,643.1 L3745.8,650.6 L3740.3,656.1 L3732.8,648.6Z" fill="#00ff00"/><path d="M3738.8,724.8 L3745.8,732.3 L3740.3,737.8 L3732.8,730.3Z" fill="#00ff00"/><circle cx="2738.3" cy="451.3" r="32" fill="none" stroke="#00ff00" stroke-width="2.4"/><g transform="translate(2738.3,451.3)"><path d="M-11,-11 C-11,-17 -5,-19.5 0.5,-19.5 C7,-19.5 11.5,-16 11.5,-10 C11.5,-4 4,-1 -2,3 C-8,7 -12,12 -12,19 C-8,15 -4,15 0,17.5 C5,20 10,19 12,12" fill="none" stroke="#000" stroke-width="2.4" stroke-linecap="round"/><circle cx="-11" cy="-11" r="2.3"/></g><circle cx="3024.3" cy="451.3" r="32" fill="none" stroke="#00ff00" stroke-width="2.4"/><g transform="translate(3024.3,451.3)"><path d="M-11,-12 C-10,-17 -5,-19.5 1,-19.5 C8,-19.5 11,-16 11,-11 C11,-6 6,-2 -2,-2 M4,-2.5 C10,-1 13.5,4 13.5,9 C13.5,16 8,19.5 1,19.5 C-6,19.5 -11,17 -12,12" fill="none" stroke="#000" stroke-width="2.4" stroke-linecap="round"/><circle cx="-11" cy="-12" r="2.3"/><circle cx="-12" cy="12" r="2.3"/></g><circle cx="3739.3" cy="451.3" r="32" fill="none" stroke="#00ff00" stroke-width="2.4"/><g transform="translate(3739.3,451.3)"><path d="M4.7,-19 L-14.5,6.6 H14" fill="none" stroke="#000" stroke-width="2.4" stroke-linecap="round"/><path d="M4.7,-19.5 V19" stroke="#000" stroke-width="4.2" stroke-linecap="round"/></g><text x="2810" y="344" font-size="25" fill="#555" textLength="77" lengthAdjust="spacingAndGlyphs">北立面图</text><polyline points="2837,354 2857,354 2847,363.5 2837,354" fill="none" stroke="#333" stroke-width="1.5"/><path d="M2845.0,577.0 L2845.0,574.5 L2847.3,572.0 L2854.3,572.0 L2856.6,574.5 L2856.6,580.8 L2845.0,597.0 L2856.6,597.0 M2869.2,597.0 L2869.2,572.0 L2860.5,588.9 L2872.1,588.9 M2878.3,577.0 L2882.3,572.0 L2882.3,597.0 M2891.4,577.0 L2891.4,574.5 L2893.7,572.0 L2900.7,572.0 L2903.0,574.5 L2903.0,580.8 L2891.4,597.0 L2903.0,597.0 M2910.4,572.0 L2915.0,572.0 L2918.5,577.0 L2918.5,592.0 L2915.0,597.0 L2910.4,597.0 L2906.9,592.0 L2906.9,577.0 L2910.4,572.0" fill="none" stroke="#000" stroke-width="2.2" stroke-linejoin="round" stroke-linecap="round"/><path d="M2363.6,626.7 L2360.1,631.1 L2355.5,631.1 L2352.0,626.7 L2352.0,621.7 L2355.5,616.7 L2360.1,616.7 L2363.6,621.7 L2363.6,634.2 L2360.1,640.5 L2356.6,641.7 L2353.2,640.5 M2370.9,616.7 L2375.6,616.7 L2379.1,621.7 L2379.1,636.7 L2375.6,641.7 L2370.9,641.7 L2367.5,636.7 L2367.5,621.7 L2370.9,616.7 M2386.4,616.7 L2391.1,616.7 L2394.5,621.7 L2394.5,636.7 L2391.1,641.7 L2386.4,641.7 L2382.9,636.7 L2382.9,621.7 L2386.4,616.7 M2401.9,616.7 L2406.5,616.7 L2410.0,621.7 L2410.0,636.7 L2406.5,641.7 L2401.9,641.7 L2398.4,636.7 L2398.4,621.7 L2401.9,616.7" fill="none" stroke="#000" stroke-width="2.2" stroke-linejoin="round" stroke-linecap="round"/><path d="M2853.0,616.7 L2864.5,616.7 L2857.6,626.1 L2861.1,626.1 L2864.5,629.8 L2864.5,637.3 L2861.1,641.7 L2856.4,641.7 L2853.0,638.0 M2878.7,618.0 L2875.2,616.7 L2871.8,618.6 L2868.3,624.2 L2868.3,636.7 L2871.8,641.7 L2876.4,641.7 L2879.8,636.7 L2879.8,631.7 L2876.4,627.3 L2871.8,627.3 L2868.3,631.7 M2887.1,616.7 L2891.7,616.7 L2895.2,621.7 L2895.2,636.7 L2891.7,641.7 L2887.1,641.7 L2883.7,636.7 L2883.7,621.7 L2887.1,616.7 M2902.4,616.7 L2907.1,616.7 L2910.5,621.7 L2910.5,636.7 L2907.1,641.7 L2902.4,641.7 L2899.0,636.7 L2899.0,621.7 L2902.4,616.7" fill="none" stroke="#000" stroke-width="2.2" stroke-linejoin="round" stroke-linecap="round"/><path d="M3364.8,626.7 L3361.3,631.1 L3356.5,631.1 L3353.0,626.7 L3353.0,621.7 L3356.5,616.7 L3361.3,616.7 L3364.8,621.7 L3364.8,634.2 L3361.3,640.5 L3357.7,641.7 L3354.2,640.5 M3372.3,616.7 L3377.0,616.7 L3380.5,621.7 L3380.5,636.7 L3377.0,641.7 L3372.3,641.7 L3368.7,636.7 L3368.7,621.7 L3372.3,616.7 M3388.0,616.7 L3392.7,616.7 L3396.3,621.7 L3396.3,636.7 L3392.7,641.7 L3388.0,641.7 L3384.5,636.7 L3384.5,621.7 L3388.0,616.7 M3403.7,616.7 L3408.5,616.7 L3412.0,621.7 L3412.0,636.7 L3408.5,641.7 L3403.7,641.7 L3400.2,636.7 L3400.2,621.7 L3403.7,616.7" fill="none" stroke="#000" stroke-width="2.2" stroke-linejoin="round" stroke-linecap="round"/><path d="M2363.6,708.3 L2360.1,712.7 L2355.5,712.7 L2352.0,708.3 L2352.0,703.3 L2355.5,698.3 L2360.1,698.3 L2363.6,703.3 L2363.6,715.8 L2360.1,722.0 L2356.6,723.3 L2353.2,722.0 M2370.9,698.3 L2375.6,698.3 L2379.1,703.3 L2379.1,718.3 L2375.6,723.3 L2370.9,723.3 L2367.5,718.3 L2367.5,703.3 L2370.9,698.3 M2386.4,698.3 L2391.1,698.3 L2394.5,703.3 L2394.5,718.3 L2391.1,723.3 L2386.4,723.3 L2382.9,718.3 L2382.9,703.3 L2386.4,698.3 M2401.9,698.3 L2406.5,698.3 L2410.0,703.3 L2410.0,718.3 L2406.5,723.3 L2401.9,723.3 L2398.4,718.3 L2398.4,703.3 L2401.9,698.3" fill="none" stroke="#000" stroke-width="2.2" stroke-linejoin="round" stroke-linecap="round"/><path d="M2853.0,698.3 L2864.5,698.3 L2857.6,707.7 L2861.1,707.7 L2864.5,711.4 L2864.5,718.9 L2861.1,723.3 L2856.4,723.3 L2853.0,719.5 M2878.7,699.5 L2875.2,698.3 L2871.8,700.2 L2868.3,705.8 L2868.3,718.3 L2871.8,723.3 L2876.4,723.3 L2879.8,718.3 L2879.8,713.3 L2876.4,708.9 L2871.8,708.9 L2868.3,713.3 M2887.1,698.3 L2891.7,698.3 L2895.2,703.3 L2895.2,718.3 L2891.7,723.3 L2887.1,723.3 L2883.7,718.3 L2883.7,703.3 L2887.1,698.3 M2902.4,698.3 L2907.1,698.3 L2910.5,703.3 L2910.5,718.3 L2907.1,723.3 L2902.4,723.3 L2899.0,718.3 L2899.0,703.3 L2902.4,698.3" fill="none" stroke="#000" stroke-width="2.2" stroke-linejoin="round" stroke-linecap="round"/><path d="M3364.8,708.3 L3361.3,712.7 L3356.5,712.7 L3353.0,708.3 L3353.0,703.3 L3356.5,698.3 L3361.3,698.3 L3364.8,703.3 L3364.8,715.8 L3361.3,722.0 L3357.7,723.3 L3354.2,722.0 M3372.3,698.3 L3377.0,698.3 L3380.5,703.3 L3380.5,718.3 L3377.0,723.3 L3372.3,723.3 L3368.7,718.3 L3368.7,703.3 L3372.3,698.3 M3388.0,698.3 L3392.7,698.3 L3396.3,703.3 L3396.3,718.3 L3392.7,723.3 L3388.0,723.3 L3384.5,718.3 L3384.5,703.3 L3388.0,698.3 M3403.7,698.3 L3408.5,698.3 L3412.0,703.3 L3412.0,718.3 L3408.5,723.3 L3403.7,723.3 L3400.2,718.3 L3400.2,703.3 L3403.7,698.3" fill="none" stroke="#000" stroke-width="2.2" stroke-linejoin="round" stroke-linecap="round"/><path d="M3347.8,775.0 L3352.8,775.0 L3355.9,778.1 L3355.9,783.1 L3352.8,786.9 L3347.8,786.9 L3344.6,783.1 L3344.6,778.1 L3347.8,775.0 M3347.8,786.9 L3344.0,790.6 L3344.0,796.2 L3347.8,800.0 L3352.8,800.0 L3356.5,796.2 L3356.5,790.6 L3352.8,786.9 M3364.5,775.0 L3369.5,775.0 L3373.3,780.0 L3373.3,795.0 L3369.5,800.0 L3364.5,800.0 L3360.7,795.0 L3360.7,780.0 L3364.5,775.0 M3381.2,775.0 L3386.2,775.0 L3390.0,780.0 L3390.0,795.0 L3386.2,800.0 L3381.2,800.0 L3377.5,795.0 L3377.5,780.0 L3381.2,775.0" fill="none" stroke="#000" stroke-width="2.2" stroke-linejoin="round" stroke-linecap="round"/><text x="3392" y="801" font-size="28.9" font-weight="bold" fill="#000" textLength="58.5" lengthAdjust="spacingAndGlyphs">宽散水</text><polyline points="3450.5,807.7 3302,807.7 3240.6,904.3" fill="none" stroke="#000000" stroke-width="1.6"/><circle cx="3240.6" cy="904.3" r="3.5" fill="none" stroke="#000" stroke-width="1.5"/><line x1="2100" y1="875.7" x2="3748" y2="875.7" stroke="#000000" stroke-width="2.2"/><line x1="2100" y1="930.6" x2="3748" y2="930.6" stroke="#000000" stroke-width="2.2"/><line x1="2100" y1="937.4" x2="3748" y2="937.4" stroke="#000000" stroke-width="2.2"/><line x1="2100" y1="941.2" x2="3748" y2="941.2" stroke="#000000" stroke-width="2"/><line x1="2100" y1="947" x2="3748" y2="947" stroke="#999" stroke-width="1.5" stroke-dasharray="2 19 2 25"/><line x1="2100" y1="952.5" x2="2676.7" y2="952.5" stroke="#000000" stroke-width="2.2"/><line x1="2694" y1="952.5" x2="2715.4" y2="952.5" stroke="#000000" stroke-width="2.2"/><line x1="2762" y1="952.5" x2="3000.4" y2="952.5" stroke="#000000" stroke-width="2.2"/><line x1="3049.4" y1="952.5" x2="3184.8" y2="952.5" stroke="#000000" stroke-width="2.2"/><line x1="3200" y1="952.5" x2="3715.7" y2="952.5" stroke="#000000" stroke-width="2.2"/><line x1="2100" y1="960" x2="3748" y2="960" stroke="#ff0000" stroke-width="2" stroke-dasharray="166 10 3 13" stroke-dashoffset="177"/><path d="M2881.5,926 V880 L2886,905 Z" fill="#00ff00" stroke="#00ff00" stroke-width="1.5"/><path d="M2920.5,887.0 L2920.5,900.9 L2912.1,892.6 L2912.1,896.8 L2908.7,900.9 L2901.9,900.9 L2898.0,896.8 L2898.0,891.2 L2901.4,887.0 M2898.0,905.6 L2920.5,919.5 M2920.5,907.7 L2920.5,910.4 L2918.2,911.8 L2914.9,911.8 L2912.6,910.4 L2912.6,907.7 L2914.9,906.3 L2918.2,906.3 L2920.5,907.7 M2905.9,914.6 L2905.9,917.4 L2903.6,918.8 L2900.2,918.8 L2898.0,917.4 L2898.0,914.6 L2900.2,913.2 L2903.6,913.2 L2905.9,914.6" fill="none" stroke="#000" stroke-width="2.2" stroke-linejoin="round" stroke-linecap="round"/><rect x="2715.4" y="937.4" width="46.59999999999991" height="46.60000000000002" fill="#cccccc" stroke="#000" stroke-width="2"/><rect x="3000.4" y="937.4" width="49.0" height="46.60000000000002" fill="#cccccc" stroke="#000" stroke-width="2"/><rect x="3715.7" y="937.4" width="54.30000000000018" height="46.60000000000002" fill="#cccccc" stroke="#000" stroke-width="2"/><line x1="2738.3" y1="937.4" x2="2738.3" y2="984" stroke="#ff0000" stroke-width="2"/><line x1="3024.3" y1="937.4" x2="3024.3" y2="984" stroke="#ff0000" stroke-width="2"/><line x1="3739.3" y1="937.4" x2="3739.3" y2="984" stroke="#ff0000" stroke-width="2"/><line x1="2715.4" y1="960" x2="2762" y2="960" stroke="#ff0000" stroke-width="2"/><line x1="3000.4" y1="960" x2="3049.4" y2="960" stroke="#ff0000" stroke-width="2"/><line x1="3715.7" y1="960" x2="3748" y2="960" stroke="#ff0000" stroke-width="2"/><polyline points="2676.7,952.5 2676.7,984 2693.5,984 2693.5,952.5" fill="none" stroke="#000000" stroke-width="2"/><line x1="2683.5" y1="937.4" x2="2683.5" y2="1062.8" stroke="#000000" stroke-width="2"/><line x1="2684" y1="984" x2="2763" y2="984" stroke="#00ffff" stroke-width="2.4"/><path d="M2763.5,984 A80,80 0 0 1 2683.5,1064" fill="none" stroke="#00ffff" stroke-width="1.8"/><polyline points="2676.7,1062.8 2693.5,1062.8" fill="none" stroke="#000000" stroke-width="2"/><polyline points="2676.7,1062.8 2676.7,1085 2715.4,1126.7 2715.4,1651 2675,1687 2675,1714 2694,1714 2694,1697.6 2731.3,1658 2731.3,1126 2693.5,1081 2693.5,1062.8" fill="none" stroke="#000000" stroke-width="2"/><polyline points="2684,1062.8 2684,1082 2723.3,1122 2723.3,1655 2684.8,1691 2684.8,1714" fill="none" stroke="#000000" stroke-width="2"/><line x1="2683.6" y1="1714" x2="2683.6" y2="1794" stroke="#000000" stroke-width="2"/><path d="M2683.6,1714.4 A78,78 0 0 1 2761.6,1794.2" fill="none" stroke="#00ffff" stroke-width="1.8"/><line x1="2683.6" y1="1794.2" x2="2715" y2="1794.2" stroke="#00ffff" stroke-width="2.4"/><polyline points="2675,1810 2675,1794 2694,1794 2694,1810" fill="none" stroke="#000000" stroke-width="2"/><rect x="2715" y="1365" width="47" height="49" fill="#cccccc" stroke="#000" stroke-width="2"/><rect x="2715" y="1794" width="47" height="48.5" fill="#cccccc" stroke="#000" stroke-width="2"/><line x1="2738.3" y1="1365" x2="2738.3" y2="1414" stroke="#ff0000" stroke-width="2"/><line x1="2738.3" y1="1794" x2="2738.3" y2="1842.5" stroke="#ff0000" stroke-width="2"/><line x1="1859.5" y1="1818" x2="3748" y2="1818" stroke="#ff0000" stroke-width="2" stroke-dasharray="166 10 3 13" stroke-dashoffset="128.8"/><line x1="1860.5" y1="1388.3" x2="3748" y2="1388.3" stroke="#ff0000" stroke-width="2" stroke-dasharray="166 10 3 13" stroke-dashoffset="129.8"/><line x1="2047" y1="1810" x2="2675" y2="1810" stroke="#000000" stroke-width="2"/><line x1="2047" y1="1826.6" x2="2675" y2="1826.6" stroke="#000000" stroke-width="2"/><line x1="2694" y1="1810" x2="2715" y2="1810" stroke="#000000" stroke-width="2"/><line x1="2694" y1="1826.6" x2="2715" y2="1826.6" stroke="#000000" stroke-width="2"/><line x1="2675" y1="1826.6" x2="2675" y2="1901" stroke="#000000" stroke-width="2"/><line x1="2684.8" y1="1826.6" x2="2684.8" y2="1901" stroke="#000000" stroke-width="2"/><line x1="2694" y1="1826.6" x2="2694" y2="1901" stroke="#000000" stroke-width="2"/><line x1="2715" y1="1842.5" x2="2715" y2="1901" stroke="#000000" stroke-width="2"/><line x1="2723.5" y1="1842.5" x2="2723.5" y2="1901" stroke="#000000" stroke-width="2"/><line x1="2731" y1="1842.5" x2="2731" y2="1901" stroke="#000000" stroke-width="2"/><line x1="2778" y1="1128.5" x2="2778" y2="1901" stroke="#00ff00" stroke-width="2.4"/><line x1="2749" y1="1128.5" x2="2793" y2="1128.5" stroke="#00ff00" stroke-width="2.2"/><path d="M2777.5,1122.0 L2784.5,1129.5 L2779,1135.0 L2771.5,1127.5Z" fill="#00ff00"/><path d="M2777.5,1381.5 L2784.5,1389 L2779,1394.5 L2771.5,1387Z" fill="#00ff00"/><path d="M2777.5,1644.9 L2784.5,1652.4 L2779,1657.9 L2771.5,1650.4Z" fill="#00ff00"/><path d="M2777.5,1682.5 L2784.5,1690 L2779,1695.5 L2771.5,1688Z" fill="#00ff00"/><path d="M2777.5,1707.5 L2784.5,1715 L2779,1720.5 L2771.5,1713Z" fill="#00ff00"/><path d="M2777.5,1787.5 L2784.5,1795 L2779,1800.5 L2771.5,1793Z" fill="#00ff00"/><path d="M2777.5,1811.5 L2784.5,1819 L2779,1824.5 L2771.5,1817Z" fill="#00ff00"/><line x1="2764" y1="1651.4" x2="2793" y2="1651.4" stroke="#00ff00" stroke-width="2"/><line x1="2764" y1="1689" x2="2793" y2="1689" stroke="#00ff00" stroke-width="2"/><line x1="2764" y1="1714" x2="2793" y2="1714" stroke="#00ff00" stroke-width="2"/><line x1="2764" y1="1794" x2="2793" y2="1794" stroke="#00ff00" stroke-width="2"/><path d="M2745.5,1288.0 L2745.5,1276.0 L2754.5,1283.2 L2754.5,1279.6 L2758.1,1276.0 L2765.3,1276.0 L2769.5,1279.6 L2769.5,1284.4 L2765.9,1288.0 M2750.3,1272.0 L2747.9,1272.0 L2745.5,1269.6 L2745.5,1262.4 L2747.9,1260.0 L2753.9,1260.0 L2769.5,1272.0 L2769.5,1260.0 M2745.5,1252.4 L2745.5,1247.6 L2748.5,1244.6 L2753.3,1244.6 L2756.9,1247.6 L2756.9,1252.4 L2753.3,1255.4 L2748.5,1255.4 L2745.5,1252.4 M2756.9,1252.4 L2760.5,1256.0 L2765.9,1256.0 L2769.5,1252.4 L2769.5,1247.6 L2765.9,1244.0 L2760.5,1244.0 L2756.9,1247.6 M2769.5,1231.0 L2745.5,1231.0 L2761.7,1240.0 L2761.7,1228.0" fill="none" stroke="#000" stroke-width="2.2" stroke-linejoin="round" stroke-linecap="round"/><path d="M2745.5,1548.4 L2745.5,1537.1 L2754.5,1543.9 L2754.5,1540.5 L2758.1,1537.1 L2765.3,1537.1 L2769.5,1540.5 L2769.5,1545.0 L2765.9,1548.4 M2750.3,1533.3 L2747.9,1533.3 L2745.5,1531.0 L2745.5,1524.2 L2747.9,1521.9 L2753.9,1521.9 L2769.5,1533.3 L2769.5,1521.9 M2745.5,1514.8 L2745.5,1510.2 L2748.5,1507.4 L2753.3,1507.4 L2756.9,1510.2 L2756.9,1514.8 L2753.3,1517.6 L2748.5,1517.6 L2745.5,1514.8 M2756.9,1514.8 L2760.5,1518.2 L2765.9,1518.2 L2769.5,1514.8 L2769.5,1510.2 L2765.9,1506.8 L2760.5,1506.8 L2756.9,1510.2 M2769.5,1494.5 L2745.5,1494.5 L2761.7,1503.0 L2761.7,1491.7" fill="none" stroke="#000" stroke-width="2.2" stroke-linejoin="round" stroke-linecap="round"/><path d="M2769.5,1636.4 L2745.5,1636.4 L2761.7,1645.0 L2761.7,1633.5 M2745.5,1626.3 L2745.5,1621.7 L2750.3,1618.3 L2764.7,1618.3 L2769.5,1621.7 L2769.5,1626.3 L2764.7,1629.7 L2750.3,1629.7 L2745.5,1626.3 M2769.5,1605.9 L2745.5,1605.9 L2761.7,1614.5 L2761.7,1603.0" fill="none" stroke="#000" stroke-width="2.2" stroke-linejoin="round" stroke-linecap="round"/><path d="M2754.8,1787.6 L2750.0,1783.5 L2774.0,1783.5 M2750.0,1770.6 L2750.0,1765.8 L2754.8,1762.3 L2769.2,1762.3 L2774.0,1765.8 L2774.0,1770.6 L2769.2,1774.1 L2754.8,1774.1 L2750.0,1770.6 M2750.0,1754.7 L2750.0,1750.0 L2754.8,1746.4 L2769.2,1746.4 L2774.0,1750.0 L2774.0,1754.7 L2769.2,1758.3 L2754.8,1758.3 L2750.0,1754.7 M2750.0,1738.9 L2750.0,1734.1 L2754.8,1730.6 L2769.2,1730.6 L2774.0,1734.1 L2774.0,1738.9 L2769.2,1742.4 L2754.8,1742.4 L2750.0,1738.9 M2754.8,1726.6 L2752.4,1726.6 L2750.0,1724.2 L2750.0,1717.1 L2752.4,1714.7 L2758.4,1714.7 L2774.0,1726.6 L2774.0,1714.7 M2750.0,1710.7 L2750.0,1698.9 L2774.0,1707.2 M2754.8,1692.5 L2750.0,1688.3 L2774.0,1688.3" fill="none" stroke="#000" stroke-width="2.2" stroke-linejoin="round" stroke-linecap="round"/><path d="M2785.0,1702.0 L2785.0,1691.3 L2809.0,1698.8 M2789.8,1685.6 L2785.0,1681.8 L2809.0,1681.8" fill="none" stroke="#000" stroke-width="2.2" stroke-linejoin="round" stroke-linecap="round"/><path d="M2750.0,1836.0 L2750.0,1824.0 L2759.0,1831.2 L2759.0,1827.6 L2762.6,1824.0 L2769.8,1824.0 L2774.0,1827.6 L2774.0,1832.4 L2770.4,1836.0 M2750.0,1816.4 L2750.0,1811.6 L2754.8,1808.0 L2769.2,1808.0 L2774.0,1811.6 L2774.0,1816.4 L2769.2,1820.0 L2754.8,1820.0 L2750.0,1816.4 M2750.0,1800.4 L2750.0,1795.6 L2754.8,1792.0 L2769.2,1792.0 L2774.0,1795.6 L2774.0,1800.4 L2769.2,1804.0 L2754.8,1804.0 L2750.0,1800.4" fill="none" stroke="#000" stroke-width="2.2" stroke-linejoin="round" stroke-linecap="round"/><path d="M2750.3,1890.8 L2745.5,1887.0 L2769.5,1887.0 M2750.3,1878.3 L2747.9,1878.3 L2745.5,1876.1 L2745.5,1869.5 L2747.9,1867.3 L2753.9,1867.3 L2769.5,1878.3 L2769.5,1867.3 M2745.5,1852.7 L2745.5,1862.6 L2756.3,1863.7 L2754.5,1860.4 L2754.5,1856.0 L2758.1,1852.7 L2765.3,1852.7 L2769.5,1856.0 L2769.5,1860.4 L2765.9,1863.7 M2745.5,1845.7 L2745.5,1841.3 L2750.3,1838.0 L2764.7,1838.0 L2769.5,1841.3 L2769.5,1845.7 L2764.7,1849.0 L2750.3,1849.0 L2745.5,1845.7" fill="none" stroke="#000" stroke-width="2.2" stroke-linejoin="round" stroke-linecap="round"/><path d="M2668.9,1790.0 L2644.9,1790.0 L2661.7,1784.2 L2644.9,1778.4 L2668.9,1778.4 M2649.7,1772.2 L2644.9,1768.1 L2668.9,1768.1 M2644.9,1755.6 L2644.9,1750.9 L2649.7,1747.4 L2664.1,1747.4 L2668.9,1750.9 L2668.9,1755.6 L2664.1,1759.1 L2649.7,1759.1 L2644.9,1755.6 M2649.7,1743.6 L2647.3,1743.6 L2644.9,1741.3 L2644.9,1734.3 L2647.3,1732.0 L2653.3,1732.0 L2668.9,1743.6 L2668.9,1732.0 M2649.7,1725.8 L2644.9,1721.7 L2668.9,1721.7" fill="none" stroke="#000" stroke-width="2.2" stroke-linejoin="round" stroke-linecap="round"/><line x1="2620" y1="960" x2="2620" y2="1122" stroke="#00ff00" stroke-width="2.4"/><path d="M2619.5,953.5 L2626.5,961 L2621,966.5 L2613.5,959Z" fill="#00ff00"/><line x1="2600" y1="960" x2="2644" y2="960" stroke="#00ff00" stroke-width="2"/><path d="M2619.5,977.5 L2626.5,985 L2621,990.5 L2613.5,983Z" fill="#00ff00"/><line x1="2600" y1="984" x2="2644" y2="984" stroke="#00ff00" stroke-width="2"/><path d="M2619.5,1056.5 L2626.5,1064 L2621,1069.5 L2613.5,1062Z" fill="#00ff00"/><line x1="2600" y1="1063" x2="2644" y2="1063" stroke="#00ff00" stroke-width="2"/><path d="M2619.5,1079.5 L2626.5,1087 L2621,1092.5 L2613.5,1085Z" fill="#00ff00"/><line x1="2600" y1="1086" x2="2644" y2="1086" stroke="#00ff00" stroke-width="2"/><path d="M2619.5,1115.5 L2626.5,1123 L2621,1128.5 L2613.5,1121Z" fill="#00ff00"/><line x1="2600" y1="1122" x2="2644" y2="1122" stroke="#00ff00" stroke-width="2"/><path d="M2594.8,1046.9 L2590.0,1043.1 L2614.0,1043.1 M2590.0,1031.6 L2590.0,1027.3 L2594.8,1024.1 L2609.2,1024.1 L2614.0,1027.3 L2614.0,1031.6 L2609.2,1034.8 L2594.8,1034.8 L2590.0,1031.6 M2590.0,1017.4 L2590.0,1013.1 L2594.8,1009.9 L2609.2,1009.9 L2614.0,1013.1 L2614.0,1017.4 L2609.2,1020.6 L2594.8,1020.6 L2590.0,1017.4 M2590.0,1003.1 L2590.0,998.9 L2594.8,995.7 L2609.2,995.7 L2614.0,998.9 L2614.0,1003.1 L2609.2,1006.3 L2594.8,1006.3 L2590.0,1003.1 M2590.0,992.1 L2590.0,981.4 L2599.0,987.8 L2599.0,984.6 L2602.6,981.4 L2609.8,981.4 L2614.0,984.6 L2614.0,988.9 L2610.4,992.1 M2590.0,974.7 L2590.0,970.4 L2594.8,967.2 L2609.2,967.2 L2614.0,970.4 L2614.0,974.7 L2609.2,977.9 L2594.8,977.9 L2590.0,974.7 M2590.0,960.5 L2590.0,956.2 L2594.8,953.0 L2609.2,953.0 L2614.0,956.2 L2614.0,960.5 L2609.2,963.7 L2594.8,963.7 L2590.0,960.5" fill="none" stroke="#000" stroke-width="2.2" stroke-linejoin="round" stroke-linecap="round"/><path d="M2590.0,1099.0 L2590.0,1088.7 L2614.0,1095.9 M2594.8,1083.2 L2590.0,1079.6 L2614.0,1079.6" fill="none" stroke="#000" stroke-width="2.2" stroke-linejoin="round" stroke-linecap="round"/><path d="M2611.0,1167.5 L2587.0,1167.5 L2603.2,1176.0 L2603.2,1164.7 M2587.0,1157.6 L2587.0,1153.0 L2591.8,1149.7 L2606.2,1149.7 L2611.0,1153.0 L2611.0,1157.6 L2606.2,1160.9 L2591.8,1160.9 L2587.0,1157.6 M2611.0,1137.4 L2587.0,1137.4 L2603.2,1145.9 L2603.2,1134.6" fill="none" stroke="#000" stroke-width="2.2" stroke-linejoin="round" stroke-linecap="round"/><path d="M2630.4,1095.0 L2628.0,1095.0 L2625.6,1092.8 L2625.6,1086.3 L2628.0,1084.1 L2634.0,1084.1 L2649.6,1095.0 L2649.6,1084.1 M2625.6,1080.5 L2625.6,1069.5 L2649.6,1077.2 M2630.4,1063.7 L2625.6,1059.9 L2649.6,1059.9" fill="none" stroke="#000" stroke-width="2.2" stroke-linejoin="round" stroke-linecap="round"/><path d="M2671.6,1059.0 L2647.6,1059.0 L2664.4,1053.3 L2647.6,1047.6 L2671.6,1047.6 M2652.4,1041.6 L2647.6,1037.6 L2671.6,1037.6 M2647.6,1025.3 L2647.6,1020.7 L2652.4,1017.3 L2666.8,1017.3 L2671.6,1020.7 L2671.6,1025.3 L2666.8,1028.7 L2652.4,1028.7 L2647.6,1025.3 M2652.4,1013.5 L2650.0,1013.5 L2647.6,1011.3 L2647.6,1004.4 L2650.0,1002.2 L2656.0,1002.2 L2671.6,1013.5 L2671.6,1002.2 M2652.4,996.1 L2647.6,992.1 L2671.6,992.1" fill="none" stroke="#000" stroke-width="2.2" stroke-linejoin="round" stroke-linecap="round"/><path d="M2645.7,1156.0 L2645.7,1153.5 L2647.7,1151.0 L2653.8,1151.0 L2655.8,1153.5 L2655.8,1159.8 L2645.7,1176.0 L2655.8,1176.0 M2669.2,1161.0 L2666.2,1165.4 L2662.2,1165.4 L2659.1,1161.0 L2659.1,1156.0 L2662.2,1151.0 L2666.2,1151.0 L2669.2,1156.0 L2669.2,1168.5 L2666.2,1174.8 L2663.2,1176.0 L2660.2,1174.8 M2693.6,1176.0 L2693.6,1151.0 L2686.0,1167.9 L2696.1,1167.9 M2707.0,1176.0 L2707.0,1151.0 L2699.5,1167.9 L2709.6,1167.9 M2722.0,1152.2 L2719.0,1151.0 L2715.9,1152.9 L2712.9,1158.5 L2712.9,1171.0 L2715.9,1176.0 L2720.0,1176.0 L2723.0,1171.0 L2723.0,1166.0 L2720.0,1161.6 L2715.9,1161.6 L2712.9,1166.0" fill="none" stroke="#000" stroke-width="2.2" stroke-linejoin="round" stroke-linecap="round"/><path d="M2749.0,1156.0 L2749.0,1153.5 L2751.3,1151.0 L2758.2,1151.0 L2760.5,1153.5 L2760.5,1159.8 L2749.0,1176.0 L2760.5,1176.0 M2767.7,1151.0 L2772.3,1151.0 L2775.7,1156.0 L2775.7,1171.0 L2772.3,1176.0 L2767.7,1176.0 L2764.3,1171.0 L2764.3,1156.0 L2767.7,1151.0 M2783.0,1151.0 L2787.6,1151.0 L2791.0,1156.0 L2791.0,1171.0 L2787.6,1176.0 L2783.0,1176.0 L2779.5,1171.0 L2779.5,1156.0 L2783.0,1151.0" fill="none" stroke="#000" stroke-width="2.2" stroke-linejoin="round" stroke-linecap="round"/><path d="M2708.6,1194.0 L2708.6,1191.5 L2711.0,1189.0 L2718.2,1189.0 L2720.6,1191.5 L2720.6,1197.8 L2708.6,1214.0 L2720.6,1214.0 M2736.5,1199.0 L2732.9,1203.4 L2728.1,1203.4 L2724.5,1199.0 L2724.5,1194.0 L2728.1,1189.0 L2732.9,1189.0 L2736.5,1194.0 L2736.5,1206.5 L2732.9,1212.8 L2729.3,1214.0 L2725.7,1212.8" fill="none" stroke="#000" stroke-width="2.2" stroke-linejoin="round" stroke-linecap="round"/><line x1="2681.5" y1="1183" x2="2743" y2="1183" stroke="#00ff00" stroke-width="2.2"/><line x1="2681.5" y1="1158" x2="2681.5" y2="1203" stroke="#00ff00" stroke-width="2"/><path d="M2681.0,1176.5 L2688.0,1184 L2682.5,1189.5 L2675.0,1182Z" fill="#00ff00"/><line x1="2723" y1="1158" x2="2723" y2="1203" stroke="#00ff00" stroke-width="2"/><path d="M2722.5,1176.5 L2729.5,1184 L2724,1189.5 L2716.5,1182Z" fill="#00ff00"/><line x1="2738.5" y1="1158" x2="2738.5" y2="1203" stroke="#00ff00" stroke-width="2"/><path d="M2738.0,1176.5 L2745.0,1184 L2739.5,1189.5 L2732.0,1182Z" fill="#00ff00"/><polyline points="3000.4,984 3000.4,1254 3041.5,1254 3041.5,1238 3015.6,1238 3015.6,984" fill="none" stroke="#000000" stroke-width="2"/><line x1="3041.5" y1="1246" x2="3041.5" y2="1294" stroke="#00ffff" stroke-width="2.2"/><line x1="3137" y1="1246" x2="3137" y2="1294" stroke="#00ffff" stroke-width="2.2"/><path d="M3041.5,1294 A48,48 0 0 0 3089.5,1246 M3137,1294 A48,48 0 0 1 3089,1246" fill="none" stroke="#00ffff" stroke-width="1.8"/><polyline points="3137,1238 3184.8,1238 3184.8,952.5" fill="none" stroke="#000000" stroke-width="2"/><polyline points="3137,1238 3137,1254 3184.8,1254 3184.8,1285.9 3200,1285.9 3200,952.5" fill="none" stroke="#000000" stroke-width="2"/><line x1="3192" y1="1286.3" x2="3192" y2="1396.4" stroke="#000000" stroke-width="2"/><path d="M3112.3,1364.5 A79,79 0 0 1 3184.7,1286.3" fill="none" stroke="#00ffff" stroke-width="1.8"/><line x1="3112" y1="1364.5" x2="3192" y2="1364.5" stroke="#00ffff" stroke-width="2.4"/><polyline points="3184.7,1364.5 3184.7,1388.4 3199.2,1388.4 3199.2,1364.5 3184.7,1364.5" fill="none" stroke="#000000" stroke-width="2"/><rect x="3000" y="1365" width="49.40000000000009" height="49" fill="#cccccc" stroke="#000" stroke-width="2"/><rect x="3000" y="1794" width="49.40000000000009" height="48.5" fill="#cccccc" stroke="#000" stroke-width="2"/><line x1="3024.3" y1="1365" x2="3024.3" y2="1414" stroke="#ff0000" stroke-width="2"/><line x1="3024.3" y1="1794" x2="3024.3" y2="1842.5" stroke="#ff0000" stroke-width="2"/><line x1="3113" y1="1388.4" x2="3715" y2="1388.4" stroke="#000000" stroke-width="2"/><line x1="3079" y1="1396.4" x2="3715" y2="1396.4" stroke="#000000" stroke-width="2"/><line x1="3086" y1="1405.8" x2="3715" y2="1405.8" stroke="#000000" stroke-width="2"/><polyline points="3049.3,1405.8 3070.3,1405.8 3070.3,1413.8 3086,1413.8 3086,1405.8" fill="none" stroke="#000000" stroke-width="2"/><line x1="3079" y1="1396.4" x2="3079" y2="1491.7" stroke="#000000" stroke-width="2"/><line x1="3049.4" y1="1414" x2="3078.8" y2="1414" stroke="#00ffff" stroke-width="2.4"/><path d="M3000,1414 A78.8,78.8 0 0 0 3071,1491.7" fill="none" stroke="#00ffff" stroke-width="1.8"/><polyline points="3071,1491.7 3086,1491.7" fill="none" stroke="#000000" stroke-width="2"/><polyline points="3071,1491.7 3071,1519 3031.3,1550.5 3031.3,1794" fill="none" stroke="#000000" stroke-width="2"/><polyline points="3086,1491.7 3086,1519 3048,1557 3048,1794" fill="none" stroke="#000000" stroke-width="2"/><polyline points="3078,1515 3039.7,1553 3039.7,1794" fill="none" stroke="#000000" stroke-width="2"/><line x1="3031.3" y1="1842.5" x2="3031.3" y2="1901" stroke="#000000" stroke-width="2"/><line x1="3039.7" y1="1842.5" x2="3039.7" y2="1901" stroke="#000000" stroke-width="2"/><line x1="3048" y1="1842.5" x2="3048" y2="1901" stroke="#000000" stroke-width="2"/><rect x="3715" y="1365" width="55" height="49" fill="#cccccc" stroke="#000" stroke-width="2"/><rect x="3715" y="1794" width="55" height="48.5" fill="#cccccc" stroke="#000" stroke-width="2"/><line x1="3739.3" y1="1365" x2="3739.3" y2="1414" stroke="#ff0000" stroke-width="2"/><line x1="3739.3" y1="1794" x2="3739.3" y2="1842.5" stroke="#ff0000" stroke-width="2"/><line x1="3746" y1="1005" x2="3746" y2="1746" stroke="#00ffff" stroke-width="2.4"/><line x1="2974.6" y1="1384.6" x2="2974.6" y2="1556.8" stroke="#00ff00" stroke-width="2.4"/><path d="M2974.1,1381.5 L2981.1,1389 L2975.6,1394.5 L2968.1,1387Z" fill="#00ff00"/><line x1="2955" y1="1388" x2="3000" y2="1388" stroke="#00ff00" stroke-width="2"/><path d="M2974.1,1407.5 L2981.1,1415 L2975.6,1420.5 L2968.1,1413Z" fill="#00ff00"/><line x1="2955" y1="1414" x2="3000" y2="1414" stroke="#00ff00" stroke-width="2"/><path d="M2974.1,1485.2 L2981.1,1492.7 L2975.6,1498.2 L2968.1,1490.7Z" fill="#00ff00"/><line x1="2955" y1="1491.7" x2="3000" y2="1491.7" stroke="#00ff00" stroke-width="2"/><path d="M2974.1,1506.2 L2981.1,1513.7 L2975.6,1519.2 L2968.1,1511.7Z" fill="#00ff00"/><line x1="2955" y1="1512.7" x2="3000" y2="1512.7" stroke="#00ff00" stroke-width="2"/><path d="M2974.1,1550.3 L2981.1,1557.8 L2975.6,1563.3 L2968.1,1555.8Z" fill="#00ff00"/><line x1="2955" y1="1556.8" x2="3000" y2="1556.8" stroke="#00ff00" stroke-width="2"/><path d="M2948.8,1472.9 L2944.0,1469.2 L2968.0,1469.2 M2944.0,1457.8 L2944.0,1453.5 L2948.8,1450.4 L2963.2,1450.4 L2968.0,1453.5 L2968.0,1457.8 L2963.2,1460.9 L2948.8,1460.9 L2944.0,1457.8 M2944.0,1443.7 L2944.0,1439.5 L2948.8,1436.3 L2963.2,1436.3 L2968.0,1439.5 L2968.0,1443.7 L2963.2,1446.9 L2948.8,1446.9 L2944.0,1443.7 M2944.0,1429.6 L2944.0,1425.4 L2948.8,1422.2 L2963.2,1422.2 L2968.0,1425.4 L2968.0,1429.6 L2963.2,1432.8 L2948.8,1432.8 L2944.0,1429.6 M2944.0,1418.7 L2944.0,1408.1 L2953.0,1414.5 L2953.0,1411.3 L2956.6,1408.1 L2963.8,1408.1 L2968.0,1411.3 L2968.0,1415.5 L2964.4,1418.7 M2944.0,1401.5 L2944.0,1397.2 L2948.8,1394.1 L2963.2,1394.1 L2968.0,1397.2 L2968.0,1401.5 L2963.2,1404.6 L2948.8,1404.6 L2944.0,1401.5 M2944.0,1387.4 L2944.0,1383.2 L2948.8,1380.0 L2963.2,1380.0 L2968.0,1383.2 L2968.0,1387.4 L2963.2,1390.6 L2948.8,1390.6 L2944.0,1387.4" fill="none" stroke="#000" stroke-width="2.2" stroke-linejoin="round" stroke-linecap="round"/><path d="M2944.0,1527.0 L2944.0,1515.4 L2968.0,1523.5 M2948.8,1509.3 L2944.0,1505.2 L2968.0,1505.2" fill="none" stroke="#000" stroke-width="2.2" stroke-linejoin="round" stroke-linecap="round"/><path d="M2968.0,1600.4 L2944.0,1600.4 L2960.2,1609.0 L2960.2,1597.5 M2944.0,1593.7 L2944.0,1582.3 L2968.0,1590.3 M2944.0,1567.0 L2944.0,1577.3 L2954.8,1578.5 L2953.0,1575.0 L2953.0,1570.4 L2956.6,1567.0 L2963.8,1567.0 L2968.0,1570.4 L2968.0,1575.0 L2964.4,1578.5" fill="none" stroke="#000" stroke-width="2.2" stroke-linejoin="round" stroke-linecap="round"/><path d="M2984.8,1525.0 L2982.4,1525.0 L2980.0,1522.6 L2980.0,1515.4 L2982.4,1513.0 L2988.4,1513.0 L3004.0,1525.0 L3004.0,1513.0 M2980.0,1497.0 L2980.0,1507.8 L2990.8,1509.0 L2989.0,1505.4 L2989.0,1500.6 L2992.6,1497.0 L2999.8,1497.0 L3004.0,1500.6 L3004.0,1505.4 L3000.4,1509.0 M2989.6,1481.0 L2993.8,1484.6 L2993.8,1489.4 L2989.6,1493.0 L2984.8,1493.0 L2980.0,1489.4 L2980.0,1484.6 L2984.8,1481.0 L2996.8,1481.0 L3002.8,1484.6 L3004.0,1488.2 L3002.8,1491.8" fill="none" stroke="#000" stroke-width="2.2" stroke-linejoin="round" stroke-linecap="round"/><line x1="3096.4" y1="1550.5" x2="3096.4" y2="1901" stroke="#00ff00" stroke-width="2.4"/><line x1="3071" y1="1550.5" x2="3116" y2="1550.5" stroke="#00ff00" stroke-width="2"/><path d="M3095.9,1544.0 L3102.9,1551.5 L3097.4,1557.0 L3089.9,1549.5Z" fill="#00ff00"/><path d="M3095.9,1811.5 L3102.9,1819 L3097.4,1824.5 L3089.9,1817Z" fill="#00ff00"/><path d="M3064.0,1714.4 L3064.0,1702.6 L3073.0,1709.7 L3073.0,1706.2 L3076.6,1702.6 L3083.8,1702.6 L3088.0,1706.2 L3088.0,1710.9 L3084.4,1714.4 M3064.0,1698.7 L3064.0,1687.0 L3073.0,1694.0 L3073.0,1690.5 L3076.6,1687.0 L3083.8,1687.0 L3088.0,1690.5 L3088.0,1695.2 L3084.4,1698.7 M3065.2,1672.5 L3064.0,1676.0 L3065.8,1679.5 L3071.2,1683.0 L3083.2,1683.0 L3088.0,1679.5 L3088.0,1674.8 L3083.2,1671.3 L3078.4,1671.3 L3074.2,1674.8 L3074.2,1679.5 L3078.4,1683.0 M3065.2,1656.8 L3064.0,1660.3 L3065.8,1663.8 L3071.2,1667.4 L3083.2,1667.4 L3088.0,1663.8 L3088.0,1659.1 L3083.2,1655.6 L3078.4,1655.6 L3074.2,1659.1 L3074.2,1663.8 L3078.4,1667.4" fill="none" stroke="#000" stroke-width="2.2" stroke-linejoin="round" stroke-linecap="round"/><path d="M3119.5,1489.6 L3095.5,1489.6 L3112.3,1483.8 L3095.5,1478.0 L3119.5,1478.0 M3100.3,1471.8 L3095.5,1467.7 L3119.5,1467.7 M3095.5,1455.1 L3095.5,1450.5 L3100.3,1447.0 L3114.7,1447.0 L3119.5,1450.5 L3119.5,1455.1 L3114.7,1458.6 L3100.3,1458.6 L3095.5,1455.1 M3100.3,1443.1 L3097.9,1443.1 L3095.5,1440.8 L3095.5,1433.8 L3097.9,1431.5 L3103.9,1431.5 L3119.5,1443.1 L3119.5,1431.5 M3100.3,1425.3 L3095.5,1421.2 L3119.5,1421.2" fill="none" stroke="#000" stroke-width="2.2" stroke-linejoin="round" stroke-linecap="round"/><line x1="3088.4" y1="1286" x2="3088.4" y2="1389" stroke="#00ff00" stroke-width="2.4"/><line x1="3068" y1="1286.3" x2="3113" y2="1286.3" stroke="#00ff00" stroke-width="2.2"/><path d="M3087.9,1279.8 L3094.9,1287.3 L3089.4,1292.8 L3081.9,1285.3Z" fill="#00ff00"/><path d="M3087.9,1358.0 L3094.9,1365.5 L3089.4,1371.0 L3081.9,1363.5Z" fill="#00ff00"/><path d="M3087.9,1382.5 L3094.9,1390 L3089.4,1395.5 L3081.9,1388Z" fill="#00ff00"/><path d="M3054.7,1396.4 L3054.7,1385.4 L3064.1,1392.0 L3064.1,1388.7 L3067.8,1385.4 L3075.3,1385.4 L3079.7,1388.7 L3079.7,1393.1 L3075.9,1396.4 M3054.7,1378.4 L3054.7,1373.9 L3059.7,1370.6 L3074.7,1370.6 L3079.7,1373.9 L3079.7,1378.4 L3074.7,1381.7 L3059.7,1381.7 L3054.7,1378.4 M3054.7,1363.6 L3054.7,1359.2 L3059.7,1355.9 L3074.7,1355.9 L3079.7,1359.2 L3079.7,1363.6 L3074.7,1366.9 L3059.7,1366.9 L3054.7,1363.6 M3059.7,1350.0 L3054.7,1346.1 L3079.7,1346.1 M3054.7,1334.2 L3054.7,1329.8 L3059.7,1326.5 L3074.7,1326.5 L3079.7,1329.8 L3079.7,1334.2 L3074.7,1337.5 L3059.7,1337.5 L3054.7,1334.2 M3054.7,1319.5 L3054.7,1315.0 L3059.7,1311.7 L3074.7,1311.7 L3079.7,1315.0 L3079.7,1319.5 L3074.7,1322.8 L3059.7,1322.8 L3054.7,1319.5 M3054.7,1304.7 L3054.7,1300.3 L3059.7,1297.0 L3074.7,1297.0 L3079.7,1300.3 L3079.7,1304.7 L3074.7,1308.0 L3059.7,1308.0 L3054.7,1304.7" fill="none" stroke="#000" stroke-width="2.2" stroke-linejoin="round" stroke-linecap="round"/><path d="M3232.5,1360.0 L3207.5,1360.0 L3225.0,1354.4 L3207.5,1348.8 L3232.5,1348.8 M3212.5,1342.8 L3207.5,1338.9 L3232.5,1338.9 M3207.5,1326.7 L3207.5,1322.3 L3212.5,1318.9 L3227.5,1318.9 L3232.5,1322.3 L3232.5,1326.7 L3227.5,1330.1 L3212.5,1330.1 L3207.5,1326.7 M3212.5,1315.2 L3210.0,1315.2 L3207.5,1312.9 L3207.5,1306.2 L3210.0,1303.9 L3216.2,1303.9 L3232.5,1315.2 L3232.5,1303.9 M3212.5,1298.0 L3207.5,1294.0 L3232.5,1294.0" fill="none" stroke="#000" stroke-width="2.2" stroke-linejoin="round" stroke-linecap="round"/><line x1="2953.9" y1="960" x2="2953.9" y2="1246" stroke="#00ff00" stroke-width="2.4"/><path d="M2953.4,953.5 L2960.4,961 L2954.9,966.5 L2947.4,959Z" fill="#00ff00"/><line x1="2934" y1="960" x2="2978" y2="960" stroke="#00ff00" stroke-width="2"/><path d="M2953.4,1239.5 L2960.4,1247 L2954.9,1252.5 L2947.4,1245Z" fill="#00ff00"/><line x1="2934" y1="1246" x2="2978" y2="1246" stroke="#00ff00" stroke-width="2"/><path d="M2922.0,1132.5 L2922.0,1120.6 L2931.0,1127.7 L2931.0,1124.1 L2934.6,1120.6 L2941.8,1120.6 L2946.0,1124.1 L2946.0,1128.9 L2942.4,1132.5 M2923.2,1105.8 L2922.0,1109.4 L2923.8,1113.0 L2929.2,1116.6 L2941.2,1116.6 L2946.0,1113.0 L2946.0,1108.2 L2941.2,1104.6 L2936.4,1104.6 L2932.2,1108.2 L2932.2,1113.0 L2936.4,1116.6 M2922.0,1097.1 L2922.0,1092.3 L2926.8,1088.7 L2941.2,1088.7 L2946.0,1092.3 L2946.0,1097.1 L2941.2,1100.7 L2926.8,1100.7 L2922.0,1097.1 M2922.0,1081.2 L2922.0,1076.4 L2926.8,1072.8 L2941.2,1072.8 L2946.0,1076.4 L2946.0,1081.2 L2941.2,1084.7 L2926.8,1084.7 L2922.0,1081.2" fill="none" stroke="#000" stroke-width="2.2" stroke-linejoin="round" stroke-linecap="round"/><text x="3067" y="1101" font-size="28.9" font-weight="bold" fill="#000" textLength="56" lengthAdjust="spacingAndGlyphs">配电间</text><path d="M3068.0,1117.5 L3078.2,1117.5 L3071.1,1142.5 M3086.2,1140.6 L3087.2,1140.6 L3087.2,1142.5 L3086.2,1142.5 L3086.2,1140.6 M3102.8,1142.5 L3102.8,1117.5 L3095.2,1134.4 L3105.4,1134.4 M3111.9,1117.5 L3115.9,1117.5 L3119.0,1122.5 L3119.0,1137.5 L3115.9,1142.5 L3111.9,1142.5 L3108.8,1137.5 L3108.8,1122.5 L3111.9,1117.5" fill="none" stroke="#000" stroke-width="2.2" stroke-linejoin="round" stroke-linecap="round"/><path d="M2956.0,1146.4 L2956.0,1143.9 L2958.3,1141.4 L2965.2,1141.4 L2967.5,1143.9 L2967.5,1150.2 L2956.0,1166.4 L2967.5,1166.4 M2974.7,1141.4 L2979.3,1141.4 L2982.7,1146.4 L2982.7,1161.4 L2979.3,1166.4 L2974.7,1166.4 L2971.3,1161.4 L2971.3,1146.4 L2974.7,1141.4 M2990.0,1141.4 L2994.6,1141.4 L2998.0,1146.4 L2998.0,1161.4 L2994.6,1166.4 L2990.0,1166.4 L2986.5,1161.4 L2986.5,1146.4 L2990.0,1141.4" fill="none" stroke="#000" stroke-width="2.2" stroke-linejoin="round" stroke-linecap="round"/><path d="M3012.4,1146.4 L3012.4,1143.9 L3014.7,1141.4 L3021.6,1141.4 L3023.9,1143.9 L3023.9,1150.2 L3012.4,1166.4 L3023.9,1166.4 M3027.7,1146.4 L3027.7,1143.9 L3030.0,1141.4 L3037.0,1141.4 L3039.3,1143.9 L3039.3,1150.2 L3027.7,1166.4 L3039.3,1166.4 M3043.1,1146.4 L3043.1,1143.9 L3045.4,1141.4 L3052.3,1141.4 L3054.6,1143.9 L3054.6,1150.2 L3043.1,1166.4 L3054.6,1166.4" fill="none" stroke="#000" stroke-width="2.2" stroke-linejoin="round" stroke-linecap="round"/><path d="M3065.2,1146.4 L3069.2,1141.4 L3069.2,1166.4 M3077.9,1146.4 L3077.9,1143.9 L3080.2,1141.4 L3086.9,1141.4 L3089.1,1143.9 L3089.1,1150.2 L3077.9,1166.4 L3089.1,1166.4 M3096.2,1141.4 L3100.7,1141.4 L3104.1,1146.4 L3104.1,1161.4 L3100.7,1166.4 L3096.2,1166.4 L3092.9,1161.4 L3092.9,1146.4 L3096.2,1141.4 M3111.2,1141.4 L3115.6,1141.4 L3119.0,1146.4 L3119.0,1161.4 L3115.6,1166.4 L3111.2,1166.4 L3107.8,1161.4 L3107.8,1146.4 L3111.2,1141.4" fill="none" stroke="#000" stroke-width="2.2" stroke-linejoin="round" stroke-linecap="round"/><path d="M3153.0,1142.7 L3149.6,1141.4 L3146.3,1143.3 L3143.0,1148.9 L3143.0,1161.4 L3146.3,1166.4 L3150.8,1166.4 L3154.1,1161.4 L3154.1,1156.4 L3150.8,1152.0 L3146.3,1152.0 L3143.0,1156.4 M3157.8,1141.4 L3168.8,1141.4 L3161.1,1166.4 M3175.8,1141.4 L3180.3,1141.4 L3183.0,1144.5 L3183.0,1149.5 L3180.3,1153.3 L3175.8,1153.3 L3173.1,1149.5 L3173.1,1144.5 L3175.8,1141.4 M3175.8,1153.3 L3172.5,1157.0 L3172.5,1162.7 L3175.8,1166.4 L3180.3,1166.4 L3183.6,1162.7 L3183.6,1157.0 L3180.3,1153.3" fill="none" stroke="#000" stroke-width="2.2" stroke-linejoin="round" stroke-linecap="round"/><line x1="3001.6" y1="1174.4" x2="3194.8" y2="1174.4" stroke="#00ff00" stroke-width="2.2"/><line x1="3008.4" y1="1153" x2="3008.4" y2="1200" stroke="#00ff00" stroke-width="2"/><path d="M3007.9,1167.9 L3014.9,1175.4 L3009.4,1180.9 L3001.9,1173.4Z" fill="#00ff00"/><line x1="3024.3" y1="1153" x2="3024.3" y2="1200" stroke="#00ff00" stroke-width="2"/><path d="M3023.8,1167.9 L3030.8,1175.4 L3025.3,1180.9 L3017.8,1173.4Z" fill="#00ff00"/><line x1="3041.5" y1="1153" x2="3041.5" y2="1200" stroke="#00ff00" stroke-width="2"/><path d="M3041.0,1167.9 L3048.0,1175.4 L3042.5,1180.9 L3035.0,1173.4Z" fill="#00ff00"/><line x1="3137" y1="1153" x2="3137" y2="1200" stroke="#00ff00" stroke-width="2"/><path d="M3136.5,1167.9 L3143.5,1175.4 L3138,1180.9 L3130.5,1173.4Z" fill="#00ff00"/><line x1="3192" y1="1153" x2="3192" y2="1200" stroke="#00ff00" stroke-width="2"/><path d="M3191.5,1167.9 L3198.5,1175.4 L3193,1180.9 L3185.5,1173.4Z" fill="#00ff00"/><text x="3394" y="1218" font-size="28.9" font-weight="bold" fill="#000" textLength="75.59999999999991" lengthAdjust="spacingAndGlyphs">弱电机房</text><path d="M3398.0,1233.0 L3408.2,1233.0 L3402.1,1242.4 L3405.1,1242.4 L3408.2,1246.1 L3408.2,1253.6 L3405.1,1258.0 L3401.1,1258.0 L3398.0,1254.2 M3411.6,1233.0 L3421.7,1233.0 L3414.6,1258.0 M3429.7,1256.1 L3430.7,1256.1 L3430.7,1258.0 L3429.7,1258.0 L3429.7,1256.1 M3447.8,1234.2 L3444.8,1233.0 L3441.7,1234.9 L3438.7,1240.5 L3438.7,1253.0 L3441.7,1258.0 L3445.8,1258.0 L3448.8,1253.0 L3448.8,1248.0 L3445.8,1243.6 L3441.7,1243.6 L3438.7,1248.0 M3452.2,1233.0 L3462.4,1233.0 L3455.3,1258.0" fill="none" stroke="#000" stroke-width="2.2" stroke-linejoin="round" stroke-linecap="round"/><path d="M3704.5,1152.4 L3699.5,1156.0 L3699.5,1160.8 L3704.5,1164.4 L3719.5,1164.4 L3724.5,1160.8 L3724.5,1156.0 L3719.5,1152.4 M3699.5,1148.5 L3699.5,1136.5 L3708.9,1143.7 L3708.9,1140.1 L3712.6,1136.5 L3720.1,1136.5 L3724.5,1140.1 L3724.5,1144.9 L3720.8,1148.5 M3699.5,1128.9 L3699.5,1124.2 L3704.5,1120.6 L3719.5,1120.6 L3724.5,1124.2 L3724.5,1128.9 L3719.5,1132.5 L3704.5,1132.5 L3699.5,1128.9 M3704.5,1114.2 L3699.5,1110.0 L3724.5,1110.0 M3699.5,1097.1 L3699.5,1092.3 L3702.6,1089.3 L3707.6,1089.3 L3711.4,1092.3 L3711.4,1097.1 L3707.6,1100.1 L3702.6,1100.1 L3699.5,1097.1 M3711.4,1097.1 L3715.1,1100.7 L3720.8,1100.7 L3724.5,1097.1 L3724.5,1092.3 L3720.8,1088.7 L3715.1,1088.7 L3711.4,1092.3" fill="none" stroke="#000" stroke-width="2.2" stroke-linejoin="round" stroke-linecap="round"/><text x="3394" y="1685" font-size="28.9" font-weight="bold" fill="#000" textLength="75.5" lengthAdjust="spacingAndGlyphs">美术教室</text><path d="M3407.4,1710.0 L3404.3,1714.4 L3400.1,1714.4 L3397.0,1710.0 L3397.0,1705.0 L3400.1,1700.0 L3404.3,1700.0 L3407.4,1705.0 L3407.4,1717.5 L3404.3,1723.8 L3401.2,1725.0 L3398.0,1723.8 M3412.9,1705.0 L3416.6,1700.0 L3416.6,1725.0 M3429.4,1723.1 L3430.4,1723.1 L3430.4,1725.0 L3429.4,1725.0 L3429.4,1723.1 M3440.6,1705.0 L3444.3,1700.0 L3444.3,1725.0 M3462.8,1710.0 L3459.7,1714.4 L3455.5,1714.4 L3452.4,1710.0 L3452.4,1705.0 L3455.5,1700.0 L3459.7,1700.0 L3462.8,1705.0 L3462.8,1717.5 L3459.7,1723.8 L3456.6,1725.0 L3453.4,1723.8" fill="none" stroke="#000" stroke-width="2.2" stroke-linejoin="round" stroke-linecap="round"/><path d="M3706.6,1630.7 L3701.6,1634.4 L3701.6,1639.3 L3706.6,1643.0 L3721.6,1643.0 L3726.6,1639.3 L3726.6,1634.4 L3721.6,1630.7 M3701.6,1626.6 L3701.6,1614.3 L3711.0,1621.7 L3711.0,1618.0 L3714.7,1614.3 L3722.2,1614.3 L3726.6,1618.0 L3726.6,1622.9 L3722.8,1626.6 M3702.8,1599.1 L3701.6,1602.8 L3703.5,1606.5 L3709.1,1610.2 L3721.6,1610.2 L3726.6,1606.5 L3726.6,1601.5 L3721.6,1597.8 L3716.6,1597.8 L3712.2,1601.5 L3712.2,1606.5 L3716.6,1610.2 M3706.6,1591.3 L3701.6,1587.0 L3726.6,1587.0 M3701.6,1573.6 L3701.6,1568.7 L3704.7,1565.6 L3709.7,1565.6 L3713.5,1568.7 L3713.5,1573.6 L3709.7,1576.7 L3704.7,1576.7 L3701.6,1573.6 M3713.5,1573.6 L3717.2,1577.3 L3722.8,1577.3 L3726.6,1573.6 L3726.6,1568.7 L3722.8,1565.0 L3717.2,1565.0 L3713.5,1568.7" fill="none" stroke="#000" stroke-width="2.2" stroke-linejoin="round" stroke-linecap="round"/><line x1="1931.3" y1="1100" x2="1931.3" y2="1638" stroke="#000000" stroke-width="2.2"/><line x1="2023.6" y1="1100" x2="2023.6" y2="1901" stroke="#ff0000" stroke-width="2" stroke-dasharray="166 10 3 13" stroke-dashoffset="165.4"/><line x1="1993.7" y1="1100" x2="1993.7" y2="1318.6" stroke="#00ffff" stroke-width="2.2"/><line x1="1993.7" y1="1414" x2="1993.7" y2="1701.6" stroke="#00ffff" stroke-width="2.2"/><line x1="1993.7" y1="1842" x2="1993.7" y2="1901" stroke="#00ffff" stroke-width="2.2"/><line x1="2001.7" y1="1100" x2="2001.7" y2="1318.6" stroke="#00ffff" stroke-width="2.2"/><line x1="2001.7" y1="1414" x2="2001.7" y2="1701.6" stroke="#00ffff" stroke-width="2.2"/><line x1="2001.7" y1="1842" x2="2001.7" y2="1901" stroke="#00ffff" stroke-width="2.2"/><line x1="2016" y1="1100" x2="2016" y2="1318.6" stroke="#00ffff" stroke-width="2.2"/><line x1="2016" y1="1414" x2="2016" y2="1701.6" stroke="#00ffff" stroke-width="2.2"/><line x1="2016" y1="1842" x2="2016" y2="1901" stroke="#00ffff" stroke-width="2.2"/><line x1="2006" y1="1100" x2="2006" y2="1318.6" stroke="#000000" stroke-width="2.2"/><line x1="2006" y1="1414" x2="2006" y2="1701.6" stroke="#000000" stroke-width="2.2"/><line x1="2006" y1="1842" x2="2006" y2="1901" stroke="#000000" stroke-width="2.2"/><polyline points="1993.7,1318.6 1993.7,1414" fill="none" stroke="#000000" stroke-width="2"/><polyline points="2016,1318.6 2016,1364" fill="none" stroke="#000000" stroke-width="2"/><line x1="1993.7" y1="1318.6" x2="2016" y2="1318.6" stroke="#00ffff" stroke-width="2.2"/><rect x="2000" y="1364" width="47.5" height="50" fill="#cccccc" stroke="#000" stroke-width="2"/><rect x="2001" y="1794.6" width="46" height="47.200000000000045" fill="#cccccc" stroke="#000" stroke-width="2"/><line x1="2023.6" y1="1364" x2="2023.6" y2="1414" stroke="#ff0000" stroke-width="2"/><line x1="2023.6" y1="1794.6" x2="2023.6" y2="1841.8" stroke="#ff0000" stroke-width="2"/><line x1="2000" y1="1388.3" x2="2047.5" y2="1388.3" stroke="#ff0000" stroke-width="2"/><line x1="2001" y1="1818" x2="2047" y2="1818" stroke="#ff0000" stroke-width="2"/><path d="M1947.0,1280.4 L1947.0,1277.9 L1949.7,1275.4 L1957.8,1275.4 L1960.5,1277.9 L1960.5,1284.2 L1947.0,1300.4 L1960.5,1300.4 M1964.9,1300.4 L1978.4,1275.4 M1967.0,1275.4 L1969.7,1275.4 L1971.0,1277.9 L1971.0,1281.7 L1969.7,1284.2 L1967.0,1284.2 L1965.6,1281.7 L1965.6,1277.9 L1967.0,1275.4 M1973.7,1291.7 L1976.4,1291.7 L1977.7,1294.2 L1977.7,1297.9 L1976.4,1300.4 L1973.7,1300.4 L1972.3,1297.9 L1972.3,1294.2 L1973.7,1291.7" fill="none" stroke="#000" stroke-width="2.2" stroke-linejoin="round" stroke-linecap="round"/><path d="M1937,1316 H1989.5 M1937,1316 L1962,1311 L1958,1316Z" fill="#00ff00" stroke="#00ff00" stroke-width="2"/><path d="M1952.0,1582.0 L1947.0,1585.6 L1947.0,1590.4 L1952.0,1594.0 L1967.0,1594.0 L1972.0,1590.4 L1972.0,1585.6 L1967.0,1582.0 M1947.0,1577.9 L1947.0,1565.9 L1956.4,1573.1 L1956.4,1569.5 L1960.1,1565.9 L1967.6,1565.9 L1972.0,1569.5 L1972.0,1574.3 L1968.2,1577.9 M1948.2,1551.0 L1947.0,1554.6 L1948.9,1558.3 L1954.5,1561.9 L1967.0,1561.9 L1972.0,1558.3 L1972.0,1553.4 L1967.0,1549.8 L1962.0,1549.8 L1957.6,1553.4 L1957.6,1558.3 L1962.0,1561.9 M1952.0,1543.4 L1947.0,1539.2 L1972.0,1539.2 M1947.0,1526.1 L1947.0,1521.3 L1950.1,1518.3 L1955.1,1518.3 L1958.9,1521.3 L1958.9,1526.1 L1955.1,1529.1 L1950.1,1529.1 L1947.0,1526.1 M1958.9,1526.1 L1962.6,1529.7 L1968.2,1529.7 L1972.0,1526.1 L1972.0,1521.3 L1968.2,1517.7 L1962.6,1517.7 L1958.9,1521.3" fill="none" stroke="#000" stroke-width="2.2" stroke-linejoin="round" stroke-linecap="round"/><path d="M1952.0,1200.0 L1947.0,1203.6 L1947.0,1208.4 L1952.0,1212.0 L1967.0,1212.0 L1972.0,1208.4 L1972.0,1203.6 L1967.0,1200.0 M1947.0,1196.0 L1947.0,1184.0 L1956.4,1191.2 L1956.4,1187.6 L1960.1,1184.0 L1967.6,1184.0 L1972.0,1187.6 L1972.0,1192.4 L1968.2,1196.0 M1948.2,1169.2 L1947.0,1172.8 L1948.9,1176.4 L1954.5,1180.0 L1967.0,1180.0 L1972.0,1176.4 L1972.0,1171.6 L1967.0,1168.0 L1962.0,1168.0 L1957.6,1171.6 L1957.6,1176.4 L1962.0,1180.0 M1952.0,1161.6 L1947.0,1157.4 L1972.0,1157.4 M1947.0,1144.4 L1947.0,1139.6 L1950.1,1136.6 L1955.1,1136.6 L1958.9,1139.6 L1958.9,1144.4 L1955.1,1147.4 L1950.1,1147.4 L1947.0,1144.4 M1958.9,1144.4 L1962.6,1148.0 L1968.2,1148.0 L1972.0,1144.4 L1972.0,1139.6 L1968.2,1136.0 L1962.6,1136.0 L1958.9,1139.6" fill="none" stroke="#000" stroke-width="2.2" stroke-linejoin="round" stroke-linecap="round"/><polyline points="1931.8,1638 1859.5,1638 1859.5,1901" fill="none" stroke="#000000" stroke-width="2.2"/><line x1="1859.5" y1="1638" x2="1924" y2="1701.6" stroke="#000000" stroke-width="2"/><line x1="1931.8" y1="1638" x2="1993.7" y2="1701.6" stroke="#000000" stroke-width="2"/><rect x="1924.4" y="1701.6" width="70.6" height="137.2" fill="none" stroke="#000" stroke-width="2.2"/><rect x="1928" y="1706" width="64" height="16" fill="none" stroke="#000" stroke-width="1.8"/><rect x="1928" y="1728" width="64" height="85.8" fill="none" stroke="#000" stroke-width="1.8"/><rect x="1928" y="1818" width="64" height="18" fill="none" stroke="#000" stroke-width="1.8"/><line x1="1924" y1="1838.8" x2="1859.5" y2="1896" stroke="#000000" stroke-width="2"/><line x1="1993.7" y1="1841.8" x2="1936" y2="1896" stroke="#000000" stroke-width="2"/><line x1="1995" y1="1701.6" x2="1995" y2="1901" stroke="#000000" stroke-width="2"/><line x1="2001" y1="1701.6" x2="2001" y2="1794.6" stroke="#000000" stroke-width="2"/><path d="M1923.6,1687.0 L1921.1,1687.0 L1918.6,1684.2 L1918.6,1675.7 L1921.1,1672.9 L1927.3,1672.9 L1943.6,1687.0 L1943.6,1672.9 M1943.6,1668.1 L1918.6,1654.0 M1918.6,1666.0 L1918.6,1663.2 L1921.1,1661.8 L1924.8,1661.8 L1927.3,1663.2 L1927.3,1666.0 L1924.8,1667.4 L1921.1,1667.4 L1918.6,1666.0 M1934.8,1659.0 L1934.8,1656.1 L1937.3,1654.7 L1941.1,1654.7 L1943.6,1656.1 L1943.6,1659.0 L1941.1,1660.4 L1937.3,1660.4 L1934.8,1659.0" fill="none" stroke="#000" stroke-width="2.2" stroke-linejoin="round" stroke-linecap="round"/><path d="M1875.7,1733.0 L1875.7,1730.5 L1878.5,1728.0 L1886.8,1728.0 L1889.5,1730.5 L1889.5,1736.8 L1875.7,1753.0 L1889.5,1753.0 M1894.2,1753.0 L1908.0,1728.0 M1896.2,1728.0 L1899.0,1728.0 L1900.4,1730.5 L1900.4,1734.2 L1899.0,1736.8 L1896.2,1736.8 L1894.8,1734.2 L1894.8,1730.5 L1896.2,1728.0 M1903.2,1744.2 L1905.9,1744.2 L1907.3,1746.8 L1907.3,1750.5 L1905.9,1753.0 L1903.2,1753.0 L1901.8,1750.5 L1901.8,1746.8 L1903.2,1744.2" fill="none" stroke="#000" stroke-width="2.2" stroke-linejoin="round" stroke-linecap="round"/><path d="M1864,1771 H1917 M1866,1771 L1894,1765 L1890,1771Z" fill="#00ff00" stroke="#00ff00" stroke-width="2"/><path d="M1923.6,1886.0 L1921.1,1886.0 L1918.6,1883.3 L1918.6,1875.4 L1921.1,1872.7 L1927.3,1872.7 L1943.6,1886.0 L1943.6,1872.7 M1943.6,1868.3 L1918.6,1855.0 M1918.6,1866.3 L1918.6,1863.6 L1921.1,1862.3 L1924.8,1862.3 L1927.3,1863.6 L1927.3,1866.3 L1924.8,1867.6 L1921.1,1867.6 L1918.6,1866.3 M1934.8,1859.7 L1934.8,1857.0 L1937.3,1855.7 L1941.1,1855.7 L1943.6,1857.0 L1943.6,1859.7 L1941.1,1861.0 L1937.3,1861.0 L1934.8,1859.7" fill="none" stroke="#000" stroke-width="2.2" stroke-linejoin="round" stroke-linecap="round"/><line x1="1958" y1="1644" x2="1958" y2="1696" stroke="#00ff00" stroke-width="2.2"/><line x1="1958" y1="1845" x2="1958" y2="1896" stroke="#00ff00" stroke-width="2.2"/><path d="M1958,1670 L1955,1690 L1961,1690Z M1958,1870 L1955,1890 L1961,1890Z" fill="#00ff00"/><line x1="1597.6" y1="1100" x2="1597.6" y2="1896" stroke="#00ff00" stroke-width="2.4"/><line x1="1662" y1="1100" x2="1662" y2="1896" stroke="#00ff00" stroke-width="2.4"/><line x1="1724.7" y1="1100" x2="1724.7" y2="1896" stroke="#00ff00" stroke-width="2.4"/><line x1="1459" y1="1388.7" x2="1860.5" y2="1388.7" stroke="#00ff00" stroke-width="2.4"/><line x1="1459" y1="1818.2" x2="1859.5" y2="1818.2" stroke="#00ff00" stroke-width="2.4"/><path d="M1661.5,1382.2 L1668.5,1389.7 L1663,1395.2 L1655.5,1387.7Z" fill="#00ff00"/><path d="M1724.2,1311.5 L1731.2,1319 L1725.7,1324.5 L1718.2,1317Z" fill="#00ff00"/><path d="M1724.2,1382.2 L1731.2,1389.7 L1725.7,1395.2 L1718.2,1387.7Z" fill="#00ff00"/><path d="M1724.2,1407.5 L1731.2,1415 L1725.7,1420.5 L1718.2,1413Z" fill="#00ff00"/><path d="M1661.5,1811.7 L1668.5,1819.2 L1663,1824.7 L1655.5,1817.2Z" fill="#00ff00"/><path d="M1724.2,1692.2 L1731.2,1699.7 L1725.7,1705.2 L1718.2,1697.7Z" fill="#00ff00"/><path d="M1724.2,1811.7 L1731.2,1819.2 L1725.7,1824.7 L1718.2,1817.2Z" fill="#00ff00"/><path d="M1724.2,1835.3 L1731.2,1842.8 L1725.7,1848.3 L1718.2,1840.8Z" fill="#00ff00"/><line x1="1704" y1="1318" x2="1797" y2="1318" stroke="#00ff00" stroke-width="2.2"/><line x1="1704" y1="1414" x2="1797" y2="1414" stroke="#00ff00" stroke-width="2.2"/><line x1="1704" y1="1698.7" x2="1797" y2="1698.7" stroke="#00ff00" stroke-width="2.2"/><line x1="1704" y1="1841.8" x2="1797" y2="1841.8" stroke="#00ff00" stroke-width="2.2"/><circle cx="1427" cy="1388.7" r="32.5" fill="none" stroke="#00ff00" stroke-width="2.4"/><text x="1427" y="1406.7" text-anchor="middle" font-family="Liberation Serif" font-size="52" fill="#111">K</text><circle cx="1427" cy="1818.2" r="32.5" fill="none" stroke="#00ff00" stroke-width="2.4"/><text x="1427" y="1836.2" text-anchor="middle" font-family="Liberation Serif" font-size="52" fill="#111">J</text><path d="M1692.0,1422.0 L1692.0,1410.1 L1701.0,1417.3 L1701.0,1413.7 L1704.6,1410.1 L1711.8,1410.1 L1716.0,1413.7 L1716.0,1418.4 L1712.4,1422.0 M1692.0,1402.6 L1692.0,1397.9 L1696.8,1394.3 L1711.2,1394.3 L1716.0,1397.9 L1716.0,1402.6 L1711.2,1406.2 L1696.8,1406.2 L1692.0,1402.6 M1692.0,1386.8 L1692.0,1382.0 L1696.8,1378.5 L1711.2,1378.5 L1716.0,1382.0 L1716.0,1386.8 L1711.2,1390.3 L1696.8,1390.3 L1692.0,1386.8 M1701.6,1362.7 L1705.8,1366.2 L1705.8,1371.0 L1701.6,1374.5 L1696.8,1374.5 L1692.0,1371.0 L1692.0,1366.2 L1696.8,1362.7 L1708.8,1362.7 L1714.8,1366.2 L1716.0,1369.8 L1714.8,1373.3 M1692.0,1355.1 L1692.0,1350.4 L1696.8,1346.8 L1711.2,1346.8 L1716.0,1350.4 L1716.0,1355.1 L1711.2,1358.7 L1696.8,1358.7 L1692.0,1355.1 M1692.0,1339.3 L1692.0,1334.6 L1696.8,1331.0 L1711.2,1331.0 L1716.0,1334.6 L1716.0,1339.3 L1711.2,1342.9 L1696.8,1342.9 L1692.0,1339.3" fill="none" stroke="#000" stroke-width="2.2" stroke-linejoin="round" stroke-linecap="round"/><path d="M1692.0,1584.6 L1692.0,1573.1 L1701.0,1580.0 L1701.0,1576.5 L1704.6,1573.1 L1711.8,1573.1 L1716.0,1576.5 L1716.0,1581.1 L1712.4,1584.6 M1693.2,1558.9 L1692.0,1562.3 L1693.8,1565.8 L1699.2,1569.2 L1711.2,1569.2 L1716.0,1565.8 L1716.0,1561.2 L1711.2,1557.7 L1706.4,1557.7 L1702.2,1561.2 L1702.2,1565.8 L1706.4,1569.2 M1692.0,1550.4 L1692.0,1545.8 L1696.8,1542.4 L1711.2,1542.4 L1716.0,1545.8 L1716.0,1550.4 L1711.2,1553.9 L1696.8,1553.9 L1692.0,1550.4 M1692.0,1535.1 L1692.0,1530.5 L1696.8,1527.0 L1711.2,1527.0 L1716.0,1530.5 L1716.0,1535.1 L1711.2,1538.5 L1696.8,1538.5 L1692.0,1535.1" fill="none" stroke="#000" stroke-width="2.2" stroke-linejoin="round" stroke-linecap="round"/><path d="M1628.0,1620.8 L1628.0,1631.1 L1638.8,1632.3 L1637.0,1628.8 L1637.0,1624.2 L1640.6,1620.8 L1647.8,1620.8 L1652.0,1624.2 L1652.0,1628.8 L1648.4,1632.3 M1652.0,1608.3 L1628.0,1608.3 L1644.2,1617.0 L1644.2,1605.5 M1628.0,1598.2 L1628.0,1593.6 L1632.8,1590.1 L1647.2,1590.1 L1652.0,1593.6 L1652.0,1598.2 L1647.2,1601.6 L1632.8,1601.6 L1628.0,1598.2 M1628.0,1582.8 L1628.0,1578.2 L1632.8,1574.8 L1647.2,1574.8 L1652.0,1578.2 L1652.0,1582.8 L1647.2,1586.3 L1632.8,1586.3 L1628.0,1582.8" fill="none" stroke="#000" stroke-width="2.2" stroke-linejoin="round" stroke-linecap="round"/><path d="M1695.8,1779.2 L1691.0,1775.4 L1715.0,1775.4 M1691.0,1756.4 L1691.0,1766.0 L1701.8,1767.1 L1700.0,1763.9 L1700.0,1759.6 L1703.6,1756.4 L1710.8,1756.4 L1715.0,1759.6 L1715.0,1763.9 L1711.4,1767.1 M1691.0,1749.7 L1691.0,1745.4 L1695.8,1742.2 L1710.2,1742.2 L1715.0,1745.4 L1715.0,1749.7 L1710.2,1752.9 L1695.8,1752.9 L1691.0,1749.7 M1691.0,1735.5 L1691.0,1731.2 L1695.8,1728.0 L1710.2,1728.0 L1715.0,1731.2 L1715.0,1735.5 L1710.2,1738.7 L1695.8,1738.7 L1691.0,1735.5" fill="none" stroke="#000" stroke-width="2.2" stroke-linejoin="round" stroke-linecap="round"/><path d="M1691.0,1850.6 L1691.0,1839.3 L1700.0,1846.1 L1700.0,1842.7 L1703.6,1839.3 L1710.8,1839.3 L1715.0,1842.7 L1715.0,1847.2 L1711.4,1850.6 M1691.0,1832.1 L1691.0,1827.5 L1695.8,1824.1 L1710.2,1824.1 L1715.0,1827.5 L1715.0,1832.1 L1710.2,1835.5 L1695.8,1835.5 L1691.0,1832.1 M1691.0,1816.9 L1691.0,1812.4 L1695.8,1809.0 L1710.2,1809.0 L1715.0,1812.4 L1715.0,1816.9 L1710.2,1820.3 L1695.8,1820.3 L1691.0,1816.9" fill="none" stroke="#000" stroke-width="2.2" stroke-linejoin="round" stroke-linecap="round"/><path d="M1628.0,1189.2 L1628.0,1202.5 L1638.8,1204.0 L1637.0,1199.6 L1637.0,1193.6 L1640.6,1189.2 L1647.8,1189.2 L1652.0,1193.6 L1652.0,1199.6 L1648.4,1204.0 M1652.0,1173.2 L1628.0,1173.2 L1644.2,1184.3 L1644.2,1169.5 M1628.0,1160.1 L1628.0,1154.2 L1632.8,1149.7 L1647.2,1149.7 L1652.0,1154.2 L1652.0,1160.1 L1647.2,1164.5 L1632.8,1164.5 L1628.0,1160.1 M1628.0,1140.4 L1628.0,1134.4 L1632.8,1130.0 L1647.2,1130.0 L1652.0,1134.4 L1652.0,1140.4 L1647.2,1144.8 L1632.8,1144.8 L1628.0,1140.4" fill="none" stroke="#000" stroke-width="2.2" stroke-linejoin="round" stroke-linecap="round"/><path d="M1692.0,1204.0 L1692.0,1189.2 L1701.0,1198.1 L1701.0,1193.6 L1704.6,1189.2 L1711.8,1189.2 L1716.0,1193.6 L1716.0,1199.6 L1712.4,1204.0 M1693.2,1170.9 L1692.0,1175.4 L1693.8,1179.8 L1699.2,1184.3 L1711.2,1184.3 L1716.0,1179.8 L1716.0,1173.9 L1711.2,1169.5 L1706.4,1169.5 L1702.2,1173.9 L1702.2,1179.8 L1706.4,1184.3 M1692.0,1160.1 L1692.0,1154.2 L1696.8,1149.7 L1711.2,1149.7 L1716.0,1154.2 L1716.0,1160.1 L1711.2,1164.5 L1696.8,1164.5 L1692.0,1160.1 M1692.0,1140.4 L1692.0,1134.4 L1696.8,1130.0 L1711.2,1130.0 L1716.0,1134.4 L1716.0,1140.4 L1711.2,1144.8 L1696.8,1144.8 L1692.0,1140.4" fill="none" stroke="#000" stroke-width="2.2" stroke-linejoin="round" stroke-linecap="round"/><text x="2306.5" y="1450.8" font-size="28.9" font-weight="bold" fill="#000" textLength="136.5" lengthAdjust="spacingAndGlyphs">综合实践活动室</text><path d="M2350.3,1474.0 L2347.2,1478.4 L2343.1,1478.4 L2340.0,1474.0 L2340.0,1469.0 L2343.1,1464.0 L2347.2,1464.0 L2350.3,1469.0 L2350.3,1481.5 L2347.2,1487.8 L2344.1,1489.0 L2341.0,1487.8 M2353.7,1469.0 L2353.7,1466.5 L2355.8,1464.0 L2362.0,1464.0 L2364.1,1466.5 L2364.1,1472.8 L2353.7,1489.0 L2364.1,1489.0 M2372.1,1487.1 L2373.2,1487.1 L2373.2,1489.0 L2372.1,1489.0 L2372.1,1487.1 M2381.2,1464.0 L2391.6,1464.0 L2384.3,1489.0 M2398.1,1464.0 L2402.2,1464.0 L2404.8,1467.1 L2404.8,1472.1 L2402.2,1475.9 L2398.1,1475.9 L2395.5,1472.1 L2395.5,1467.1 L2398.1,1464.0 M2398.1,1475.9 L2395.0,1479.6 L2395.0,1485.2 L2398.1,1489.0 L2402.2,1489.0 L2405.3,1485.2 L2405.3,1479.6 L2402.2,1475.9" fill="none" stroke="#000" stroke-width="2.2" stroke-linejoin="round" stroke-linecap="round"/><g stroke="#808080" stroke-width="2.5" fill="none"><path d="M2015,1665 L2024,1676 L2033,1665 M2024,1676 V1686"/><path d="M2015,1781 H2033 L2015,1800 H2033"/><path d="M2128,1781 L2146,1800 M2146,1781 L2128,1800"/></g><line x1="2024.7" y1="1789.6" x2="2111.8" y2="1789.6" stroke="#ff0000" stroke-width="3.5"/><line x1="2023" y1="1701" x2="2023" y2="1784" stroke="#00c8a0" stroke-width="2.5"/><path d="M2649.7,750 A62.4,62.4 0 0 1 2754,750 A67.0,67.0 0 0 1 2866,750 A66.8,66.8 0 0 1 2977.7,750 A79.4,79.4 0 0 1 3090.5,820 A60.7,60.7 0 0 1 3091,921.5 A39.2,39.2 0 0 1 3090.5,987 A73.9,73.9 0 0 1 3090.5,1110.6 A76.3,76.3 0 0 1 3021.5,1218 A65.2,65.2 0 0 1 2912.5,1218 A75.0,75.0 0 0 1 2787,1218 A44.0,44.0 0 0 1 2713.4,1218 A52.4,52.4 0 0 1 2625.8,1214 A72.1,72.1 0 0 1 2625.8,1114.6 A51.9,51.9 0 0 1 2625.8,1043 A63.9,63.9 0 0 1 2620,955 A75.0,75.0 0 0 1 2627.8,851.8 A62.3,62.3 0 0 1 2649.7,750" fill="none" stroke="#ff00ff" stroke-width="2.6"/></g></svg>

<div class="a" style="left:746px;top:325px;width:1376px;height:866px;background:#efefef"></div>
<div class="a" style="left:746px;top:325px;width:1376px;height:57px;background:#f7efee"></div>
<div class="dt" style="left:762px;top:332px;color:#222">视图参照</div>
<svg style="left:2081px;top:337px" width="23" height="23"><path d="M1.5 1.5 l20 20 M21.5 1.5 l-20 20" stroke="#222" stroke-width="2.6"/></svg>
<div class="dt" style="left:768px;top:431px">当前工程：</div>
<div class="dt" style="left:1242px;top:431px">模型来源：</div>
<div class="a" style="left:1376px;top:425px;width:273px;height:45px;background:#fbfcfd;border:2px solid #c8d0d8;border-radius:3px"></div>
<div class="dt" style="left:1382px;top:432px">本工程</div>
<svg style="left:1622px;top:443px" width="20" height="12"><path d="M1 1 l9 9 l9 -9" fill="none" stroke="#555" stroke-width="2"/></svg>
<div class="a" style="left:768px;top:504px;width:401px;height:551px;background:#fff;border:2px solid #8e95a1"></div>
<div class="a" style="left:1243px;top:504px;width:402px;height:556px;background:#fff;border:2px solid #8e95a1"></div>
<div class="a" style="left:1606px;top:508px;width:22px;height:550px;background:#f0f0f0"></div>
<div class="a" style="left:1619px;top:544px;width:5px;height:440px;background:#8a8a8a;border-radius:2px"></div>
<div class="a" style="left:1246px;top:495px;width:390px;height:572px;border:7px solid #f79c5e"></div>
<div class="dt" style="left:1186px;top:760px;font-size:24px">&lt;&lt;</div>

<div class="a" style="left:837px;top:537.5px;width:0;height:432.6px;border-left:2px dotted #8a8a8a"></div>
<div class="a" style="left:877px;top:571.7px;width:0;height:227.4px;border-left:2px dotted #8a8a8a"></div>
<div class="a" style="left:917px;top:607.9px;width:0;height:88.6px;border-left:2px dotted #8a8a8a"></div>
<div class="a" style="left:806px;top:525.5px;width:14px;height:0;border-top:2px dotted #8a8a8a"></div>
<div class="a" style="left:847px;top:559.7px;width:14px;height:0;border-top:2px dotted #8a8a8a"></div>
<div class="a" style="left:887px;top:593.9px;width:15px;height:0;border-top:2px dotted #8a8a8a"></div>
<div class="a" style="left:917px;top:628.1px;width:25px;height:0;border-top:2px dotted #8a8a8a"></div>
<div class="a" style="left:917px;top:662.3px;width:25px;height:0;border-top:2px dotted #8a8a8a"></div>
<div class="a" style="left:917px;top:696.5px;width:25px;height:0;border-top:2px dotted #8a8a8a"></div>
<div class="a" style="left:887px;top:730.7px;width:15px;height:0;border-top:2px dotted #8a8a8a"></div>
<div class="a" style="left:887px;top:764.9px;width:15px;height:0;border-top:2px dotted #8a8a8a"></div>
<div class="a" style="left:876px;top:799.1px;width:26px;height:0;border-top:2px dotted #8a8a8a"></div>
<div class="a" style="left:847px;top:833.3px;width:14px;height:0;border-top:2px dotted #8a8a8a"></div>
<div class="a" style="left:847px;top:867.5px;width:14px;height:0;border-top:2px dotted #8a8a8a"></div>
<div class="a" style="left:847px;top:901.7px;width:14px;height:0;border-top:2px dotted #8a8a8a"></div>
<div class="a" style="left:847px;top:935.9px;width:14px;height:0;border-top:2px dotted #8a8a8a"></div>
<div class="a" style="left:847px;top:970.1px;width:14px;height:0;border-top:2px dotted #8a8a8a"></div>
<div class="dexp" style="left:787px;top:516.0px"></div>
<svg style="left:820px;top:511.0px" width="30" height="30" viewBox="0 0 30 30"><path d="M1.5 1.5 H11 L14 4.5 H28.5 V28.5 H1.5 Z M1.5 8.5 H28.5" fill="none" stroke="#222" stroke-width="2" stroke-linejoin="round"/></svg>
<div class="dt" style="left:863px;top:509.5px">模型树</div>
<div class="dexp" style="left:828px;top:550.2px"></div>
<svg style="left:861px;top:545.2px" width="30" height="30" viewBox="0 0 30 30"><path d="M1.5 1.5 H11 L14 4.5 H28.5 V28.5 H1.5 Z M1.5 8.5 H28.5" fill="none" stroke="#222" stroke-width="2" stroke-linejoin="round"/></svg>
<div class="dt" style="left:904px;top:543.7px">建筑</div>
<div class="dexp" style="left:868px;top:584.4px"></div>
<svg style="left:902px;top:579.4px" width="30" height="30" viewBox="0 0 30 30"><path d="M1.5 1.5 H11 L14 4.5 H28.5 V28.5 H1.5 Z M1.5 8.5 H28.5" fill="none" stroke="#222" stroke-width="2" stroke-linejoin="round"/></svg>
<div class="dt" style="left:944px;top:577.9px">楼层平面</div>
<svg style="left:942px;top:613.1px" width="30" height="30" viewBox="0 0 28 30"><path d="M2 9 L14 3 L26 8 V21 L14 27 L2 22 Z M2 9 L14 14 L26 8 M14 14 V27" fill="none" stroke="#222" stroke-width="2" stroke-linejoin="round"/></svg>
<div class="a" style="left:980px;top:611.1px;width:35px;height:34px;background:#0c7b7b"></div>
<div class="dt" style="left:983px;top:612.1px;color:#fff">1F</div>
<svg style="left:942px;top:647.3px" width="30" height="30" viewBox="0 0 28 30"><path d="M2 9 L14 3 L26 8 V21 L14 27 L2 22 Z M2 9 L14 14 L26 8 M14 14 V27" fill="none" stroke="#222" stroke-width="2" stroke-linejoin="round"/></svg>
<div class="dt" style="left:982px;top:646.3px">2F</div>
<svg style="left:942px;top:681.5px" width="30" height="30" viewBox="0 0 28 30"><path d="M2 9 L14 3 L26 8 V21 L14 27 L2 22 Z M2 9 L14 14 L26 8 M14 14 V27" fill="none" stroke="#222" stroke-width="2" stroke-linejoin="round"/></svg>
<div class="dt" style="left:982px;top:680.5px">3F</div>
<div class="dexp p" style="left:868px;top:721.2px"></div>
<svg style="left:902px;top:716.2px" width="30" height="30" viewBox="0 0 30 30"><path d="M1.5 1.5 H11 L14 4.5 H28.5 V28.5 H1.5 Z M1.5 8.5 H28.5" fill="none" stroke="#222" stroke-width="2" stroke-linejoin="round"/></svg>
<div class="dt" style="left:944px;top:714.7px">三维模型</div>
<div class="dexp p" style="left:868px;top:755.4px"></div>
<svg style="left:902px;top:750.4px" width="30" height="30" viewBox="0 0 30 30"><path d="M1.5 1.5 H11 L14 4.5 H28.5 V28.5 H1.5 Z M1.5 8.5 H28.5" fill="none" stroke="#222" stroke-width="2" stroke-linejoin="round"/></svg>
<div class="dt" style="left:944px;top:748.9px">视图集</div>
<svg style="left:902px;top:784.1px" width="30" height="30" viewBox="0 0 28 30"><path d="M2 9 L14 3 L26 8 V21 L14 27 L2 22 Z M2 9 L14 14 L26 8 M14 14 V27" fill="none" stroke="#222" stroke-width="2" stroke-linejoin="round"/></svg>
<div class="dt" style="left:944px;top:783.1px">全楼</div>
<div class="dexp p" style="left:828px;top:823.8px"></div>
<svg style="left:861px;top:818.8px" width="30" height="30" viewBox="0 0 30 30"><path d="M1.5 1.5 H11 L14 4.5 H28.5 V28.5 H1.5 Z M1.5 8.5 H28.5" fill="none" stroke="#222" stroke-width="2" stroke-linejoin="round"/></svg>
<div class="dt" style="left:904px;top:817.3px">结构</div>
<div class="dexp p" style="left:828px;top:858.0px"></div>
<svg style="left:861px;top:853.0px" width="30" height="30" viewBox="0 0 30 30"><path d="M1.5 1.5 H11 L14 4.5 H28.5 V28.5 H1.5 Z M1.5 8.5 H28.5" fill="none" stroke="#222" stroke-width="2" stroke-linejoin="round"/></svg>
<div class="dt" style="left:904px;top:851.5px">给排水</div>
<div class="dexp p" style="left:828px;top:892.2px"></div>
<svg style="left:861px;top:887.2px" width="30" height="30" viewBox="0 0 30 30"><path d="M1.5 1.5 H11 L14 4.5 H28.5 V28.5 H1.5 Z M1.5 8.5 H28.5" fill="none" stroke="#222" stroke-width="2" stroke-linejoin="round"/></svg>
<div class="dt" style="left:904px;top:885.7px">暖通</div>
<div class="dexp p" style="left:828px;top:926.4px"></div>
<svg style="left:861px;top:921.4px" width="30" height="30" viewBox="0 0 30 30"><path d="M1.5 1.5 H11 L14 4.5 H28.5 V28.5 H1.5 Z M1.5 8.5 H28.5" fill="none" stroke="#222" stroke-width="2" stroke-linejoin="round"/></svg>
<div class="dt" style="left:904px;top:919.9px">电气</div>
<div class="dexp p" style="left:828px;top:960.6px"></div>
<svg style="left:861px;top:955.6px" width="30" height="30" viewBox="0 0 30 30"><path d="M1.5 1.5 H11 L14 4.5 H28.5 V28.5 H1.5 Z M1.5 8.5 H28.5" fill="none" stroke="#222" stroke-width="2" stroke-linejoin="round"/></svg>
<div class="dt" style="left:904px;top:954.1px">轴网集</div>
<div class="a" style="left:1314px;top:539.5px;width:0;height:464.8px;border-left:2px dotted #8a8a8a"></div>
<div class="a" style="left:1355px;top:607.9px;width:0;height:259.6px;border-left:2px dotted #8a8a8a"></div>
<div class="a" style="left:1396px;top:710.5px;width:0;height:88.6px;border-left:2px dotted #8a8a8a"></div>
<div class="a" style="left:1355px;top:1018.3px;width:0;height:20.2px;border-left:2px dotted #8a8a8a"></div>
<div class="a" style="left:1284px;top:525.5px;width:11px;height:0;border-top:2px dotted #8a8a8a"></div>
<div class="a" style="left:1324px;top:559.7px;width:11px;height:0;border-top:2px dotted #8a8a8a"></div>
<div class="a" style="left:1324px;top:593.9px;width:11px;height:0;border-top:2px dotted #8a8a8a"></div>
<div class="a" style="left:1365px;top:628.1px;width:11px;height:0;border-top:2px dotted #8a8a8a"></div>
<div class="a" style="left:1365px;top:662.3px;width:11px;height:0;border-top:2px dotted #8a8a8a"></div>
<div class="a" style="left:1365px;top:696.5px;width:11px;height:0;border-top:2px dotted #8a8a8a"></div>
<div class="a" style="left:1396px;top:730.7px;width:20px;height:0;border-top:2px dotted #8a8a8a"></div>
<div class="a" style="left:1396px;top:764.9px;width:20px;height:0;border-top:2px dotted #8a8a8a"></div>
<div class="a" style="left:1396px;top:799.1px;width:20px;height:0;border-top:2px dotted #8a8a8a"></div>
<div class="a" style="left:1365px;top:833.3px;width:11px;height:0;border-top:2px dotted #8a8a8a"></div>
<div class="a" style="left:1355px;top:867.5px;width:21px;height:0;border-top:2px dotted #8a8a8a"></div>
<div class="a" style="left:1324px;top:901.7px;width:11px;height:0;border-top:2px dotted #8a8a8a"></div>
<div class="a" style="left:1324px;top:935.9px;width:11px;height:0;border-top:2px dotted #8a8a8a"></div>
<div class="a" style="left:1324px;top:970.1px;width:11px;height:0;border-top:2px dotted #8a8a8a"></div>
<div class="a" style="left:1324px;top:1004.3px;width:11px;height:0;border-top:2px dotted #8a8a8a"></div>
<div class="a" style="left:1355px;top:1038.5px;width:21px;height:0;border-top:2px dotted #8a8a8a"></div>
<div class="dexp" style="left:1265px;top:516.0px"></div>
<div class="cb" style="left:1295px;top:512.0px"></div>
<div class="a" style="left:1322px;top:508.5px;width:85px;height:34px;background:#0f78d7"></div>
<div class="dt" style="left:1326px;top:509.5px;color:#fff">模型树</div>
<div class="dexp p" style="left:1305px;top:550.2px"></div>
<div class="cb" style="left:1335px;top:546.2px"></div>
<div class="dt" style="left:1366px;top:543.7px">建筑</div>
<div class="dexp" style="left:1305px;top:584.4px"></div>
<div class="cb" style="left:1335px;top:580.4px"></div>
<div class="dt" style="left:1366px;top:577.9px">结构</div>
<div class="dexp p" style="left:1346px;top:618.6px"></div>
<div class="cb" style="left:1376px;top:614.6px"></div>
<div class="dt" style="left:1408px;top:612.1px">自然层</div>
<div class="dexp p" style="left:1346px;top:652.8px"></div>
<div class="cb" style="left:1376px;top:648.8px"></div>
<div class="dt" style="left:1408px;top:646.3px">标准层</div>
<div class="dexp" style="left:1346px;top:687.0px"></div>
<div class="cb" style="left:1376px;top:683.0px"></div>
<div class="dt" style="left:1408px;top:680.5px">楼层平面</div>
<div class="cb on" style="left:1416px;top:717.2px"></div>
<div class="dt" style="left:1447px;top:714.7px">平面层1</div>
<div class="cb" style="left:1416px;top:751.4px"></div>
<div class="dt" style="left:1447px;top:748.9px">平面层2</div>
<div class="cb" style="left:1416px;top:785.6px"></div>
<div class="dt" style="left:1447px;top:783.1px">平面层3</div>
<div class="dexp p" style="left:1346px;top:823.8px"></div>
<div class="cb" style="left:1376px;top:819.8px"></div>
<div class="dt" style="left:1408px;top:817.3px">视图集</div>
<div class="cb" style="left:1376px;top:854.0px"></div>
<div class="dt" style="left:1408px;top:851.5px">全楼</div>
<div class="dexp p" style="left:1305px;top:892.2px"></div>
<div class="cb" style="left:1335px;top:888.2px"></div>
<div class="dt" style="left:1366px;top:885.7px">给排水</div>
<div class="dexp p" style="left:1305px;top:926.4px"></div>
<div class="cb" style="left:1335px;top:922.4px"></div>
<div class="dt" style="left:1366px;top:919.9px">暖通</div>
<div class="dexp p" style="left:1305px;top:960.6px"></div>
<div class="cb" style="left:1335px;top:956.6px"></div>
<div class="dt" style="left:1366px;top:954.1px">电气</div>
<div class="dexp" style="left:1305px;top:994.8px"></div>
<div class="cb on" style="left:1335px;top:990.8px"></div>
<div class="dt" style="left:1366px;top:988.3px">轴网集</div>
<div class="cb on" style="left:1376px;top:1025.0px"></div>
<div class="dt" style="left:1408px;top:1022.5px">轴网</div>

<div class="a" style="left:1718px;top:433px;width:25px;height:26px;border:2px solid #555;border-radius:5px;background:#f7f7f7"></div>
<div class="dt" style="left:1749px;top:431px;font-size:25px">参照嵌套</div>
<div class="a" style="left:1698px;top:517px;width:400px;height:535px;border:2px solid #d8d8d8;border-radius:3px"></div>
<div class="a" style="left:1712px;top:505px;width:112px;height:30px;background:#efefef"></div>
<div class="dt" style="left:1716px;top:503px;font-size:25px">参照参数</div>
<div class="dt" style="left:1729px;top:591px;font-size:25px">插入点：</div>
<div class="btn" style="left:1909px;top:586px;width:154px;height:43px"></div>
<div class="dt" style="left:1961px;top:591px;font-size:25px">编辑</div>
<div class="dt" style="left:1729px;top:871px;font-size:25px">拾取：</div>
<div class="a" style="left:1907px;top:866px;width:152px;height:42px;background:#fff;border:2px solid #cfcfcf;border-radius:3px"></div>
<svg style="left:2031px;top:882px" width="18" height="11"><path d="M1 1 l8 8 l8 -8" fill="none" stroke="#555" stroke-width="2"/></svg>
<div class="dt" style="left:1729px;top:964px;font-size:25px">参照嵌套：</div>
<div class="a" style="left:1907px;top:960px;width:152px;height:42px;background:#ececec;border:2px solid #d4d4d4;border-radius:3px"></div>
<div class="dt" style="left:1913px;top:965px;font-size:25px;color:#888">否</div>
<div class="dt" style="left:1242px;top:1069px;font-size:25px">参照文件的路径：</div>
<div class="dt" style="left:1446px;top:1069px;font-size:24px;color:#0a1f5a">C:\Users\lenovo\Desktop\test111...</div>
<div class="btn" style="left:1910px;top:1085px;width:153px;height:43px"></div>
<div class="dt" style="left:1959px;top:1090px;font-size:25px">更新</div>


<div class="a" style="left:0;top:1905px;width:631px;height:10px;background:#efefef"></div>
<div class="a" style="left:0;top:1915px;width:631px;height:47px;background:#e6e6e6"></div>
<div class="a" style="left:0;top:1915px;width:141px;height:43px;background:#fff"></div>
<div class="a" style="left:11px;top:1921px;font-size:24px;line-height:30px;color:#333">视图浏览器</div>
<div class="a" style="left:154px;top:1921px;font-size:24px;line-height:30px;color:#777">属性</div>
<div class="a" style="left:631px;top:1901px;width:3117px;height:61px;background:#e6e6e6"></div>
<div class="a" style="left:631px;top:1900px;width:3117px;height:2px;background:#d6d6d6"></div>
<div class="a" style="left:630px;top:1902px;width:1262px;height:57px;background:#fff;border-radius:8px"></div>
<div class="a" style="left:1893px;top:1902px;width:282px;height:57px;background:#fff;border-radius:8px"></div>
<svg style="left:636px;top:1915px" width="6" height="34"><rect x="1" y="1" width="4" height="4" fill="#7a7a7a"/><rect x="1" y="9" width="4" height="4" fill="#7a7a7a"/><rect x="1" y="17" width="4" height="4" fill="#7a7a7a"/><rect x="1" y="25" width="4" height="4" fill="#7a7a7a"/></svg>
<div class="a" style="left:659px;top:1912px;font-size:24px;line-height:30px;color:#333">PP</div>
<div class="a" style="left:1829px;top:1913px;width:2px;height:32px;background:#d8d8d8"></div>
<svg style="left:1854px;top:1923px" width="17" height="11"><path d="M1.5 9.5 l7 -7 l7 7" fill="none" stroke="#1b5a78" stroke-width="2.4"/></svg>
<svg style="left:1897px;top:1915px" width="6" height="34"><rect x="1" y="1" width="4" height="4" fill="#7a7a7a"/><rect x="1" y="9" width="4" height="4" fill="#7a7a7a"/><rect x="1" y="17" width="4" height="4" fill="#7a7a7a"/><rect x="1" y="25" width="4" height="4" fill="#7a7a7a"/></svg>
<div class="a" style="left:1918px;top:1912px;font-size:24px;line-height:30px;color:#444">绘制比例</div>
<div class="a" style="left:2029px;top:1908px;width:138px;height:48px;background:#fff;border:2px solid #d2d2d2"></div>
<div class="a" style="left:2036px;top:1916px;font-size:24px;line-height:30px;color:#333">跟随全局</div>
<svg style="left:2147px;top:1929px" width="10" height="6"><path d="M0 0 h10 l-5 5z" fill="#666"/></svg>
<div class="a" style="left:0;top:1962px;width:3748px;height:2px;background:#cccccc"></div>
<div class="a" style="left:0;top:1964px;width:3748px;height:45px;background:#f0f0f0"></div>
<div class="a" style="left:1858px;top:1971px;font-size:24px;line-height:30px;color:#333">-16116.52，53454.98，0.00</div>

<div class="a" style="left:496px;top:1970px;width:39px;height:38px;background:#c8e6e0;border:2px solid #5aa59a"></div>
<svg style="left:15px;top:1974px" width="36" height="32" viewBox="0 0 36 32"><path d="M2 5 H14 L16 2 H29 V29 H2Z" fill="#d9f1f4" stroke="#1b5a78" stroke-width="2.6" stroke-linejoin="round"/><path d="M17 4 h10" stroke="#27a5ad" stroke-width="2"/></svg>
<svg style="left:67px;top:1974px" width="36" height="32" viewBox="0 0 36 32"><path d="M2 9 V2 H9 M22 2 H29 V9 M29 22 V29 H22 M9 29 H2 V22" fill="none" stroke="#1b5a78" stroke-width="2.4"/><rect x="6" y="7" width="8" height="18" fill="none" stroke="#1b5a78" stroke-width="2.4"/><rect x="17" y="7" width="8" height="18" fill="none" stroke="#1b5a78" stroke-width="2.4"/></svg>
<svg style="left:117px;top:1974px" width="36" height="32" viewBox="0 0 36 32"><path d="M2 2 H30 V18 M14 29 H2 V2 M2 8 H30" fill="#fff" stroke="#1b5a78" stroke-width="2.4"/><path d="M6 5 h3 M11 5 h3" stroke="#1b5a78" stroke-width="2"/><path d="M24 18 v12 M18 24 h12" stroke="#27a5ad" stroke-width="2.4"/></svg>
<svg style="left:182px;top:1974px" width="36" height="32" viewBox="0 0 36 32"><path d="M2 9 V2 H9 M22 2 H29 V9 M29 22 V29 H22 M9 29 H2 V22" fill="none" stroke="#1b5a78" stroke-width="2.4"/><circle cx="15.5" cy="15.5" r="7" fill="#d6eef2"/><path d="M15.5 8 V23 M8 15.5 H23" stroke="#1b5a78" stroke-width="3.5"/></svg>
<svg style="left:233px;top:1974px" width="36" height="32" viewBox="0 0 36 32"><path d="M6 29 L2 20 Q2 17 5 18 L9 22 V5 Q11 2 13 5 V14 V3 Q15 0 17 3 V14 V4 Q19 1 21 4 V15 V8 Q23 5 25 8 V21 Q25 29 17 29Z" fill="#fff" stroke="#1b5a78" stroke-width="2.2" stroke-linejoin="round"/></svg>
<svg style="left:283px;top:1974px" width="36" height="32" viewBox="0 0 36 32"><path d="M15 2 Q20 8 15 15 Q10 22 15 29 M2 15 Q8 10 15 15 Q22 20 29 15" fill="none" stroke="#1b5a78" stroke-width="2.2"/><path d="M19 12 l2 3 l-3 1z M11 19 l-2 -3 l3 -1z" fill="#1b5a78"/></svg>
<svg style="left:334px;top:1974px" width="36" height="32" viewBox="0 0 36 32"><circle cx="13" cy="13" r="10.5" fill="#fff" stroke="#1b5a78" stroke-width="2.4"/><path d="M21 21 L30 30" stroke="#1b5a78" stroke-width="2.6"/><circle cx="13" cy="8" r="1.5" fill="#27a5ad"/><circle cx="13" cy="18" r="1.5" fill="#27a5ad"/><circle cx="8" cy="13" r="1.5" fill="#27a5ad"/><circle cx="18" cy="13" r="1.5" fill="#27a5ad"/></svg>
<svg style="left:398px;top:1974px" width="36" height="32" viewBox="0 0 36 32"><path d="M2 9 L15 2 L28 9 V23 L15 30 L2 23Z M2 9 L15 16 L28 9 M15 16 V30" fill="#fff" stroke="#1b5a78" stroke-width="2.2" stroke-linejoin="round"/></svg>
<svg style="left:448px;top:1974px" width="36" height="32" viewBox="0 0 36 32"><path d="M2 9 L15 2 L28 9 V23 L15 30 L2 23Z M2 9 L28 23 M28 9 L2 23 M15 2 V30" fill="#fff" stroke="#1b5a78" stroke-width="2.2" stroke-linejoin="round"/></svg>
<svg style="left:501px;top:1974px" width="36" height="32" viewBox="0 0 36 32"><path d="M2 9 L15 2 L28 9 V23 L15 30 L2 23Z M2 9 L15 16 L28 9 M15 16 V30" fill="#fff" stroke="#1b5a78" stroke-width="2.6" stroke-linejoin="round"/></svg>
<svg style="left:551px;top:1974px" width="36" height="32" viewBox="0 0 36 32"><path d="M2 9 L15 2 L28 9 V23 L15 30 L2 23Z" fill="#c5e2ec"/><path d="M2 9 L15 16 L28 9 M15 16 V30 M2 9 L15 2 L28 9 V23 L15 30 L2 23Z" fill="none" stroke="#2a6f98" stroke-width="2" stroke-linejoin="round"/></svg>
<svg style="left:601px;top:1974px" width="36" height="32" viewBox="0 0 36 32"><path d="M2 9 L15 2 L28 9 V23 L15 30 L2 23Z" fill="#d6e6ea"/><path d="M2 9 L15 16 L28 9 V23 L15 30Z" fill="#c0d6dc"/></svg>
<svg style="left:665px;top:1974px" width="36" height="32" viewBox="0 0 36 32"><path d="M2 6 H14 M2 15 H10 M2 24 H8 M12 29 L26 2" stroke="#1b5a78" stroke-width="2.4"/><path d="M20 10 H34 M17 18 H34 M14 26 H34" stroke="#27a5ad" stroke-width="3"/></svg>
<svg style="left:721px;top:1974px" width="36" height="32" viewBox="0 0 36 32"><path d="M2 12 L10 4 L18 12 M2 22 L10 14 L18 22" fill="none" stroke="#1b5a78" stroke-width="2.4"/></svg>
<div class="a" style="left:165px;top:1975px;width:2px;height:30px;background:#cfcfcf"></div>
<div class="a" style="left:382px;top:1975px;width:2px;height:30px;background:#cfcfcf"></div>
<div class="a" style="left:649px;top:1975px;width:2px;height:30px;background:#cfcfcf"></div>
<div class="a" style="left:764px;top:1975px;width:2px;height:30px;background:#cfcfcf"></div>

<div class="a" style="left:789px;top:1988px;width:16px;height:2px;background:#999"></div>
<div class="a" style="left:822px;top:1988px;width:120px;height:2px;background:#b8b8b8"></div>
<div class="a" style="left:878px;top:1974px;width:10px;height:30px;background:#eee;border:1.5px solid #999;border-radius:2px"></div>
<div class="a" style="left:960px;top:1988px;width:17px;height:2px;background:#999"></div>
<div class="a" style="left:967.5px;top:1980px;width:2px;height:17px;background:#999"></div>


<div class="a" style="left:3373px;top:1970px;width:38px;height:38px;background:#c8e6e0;border:2px solid #5aa59a"></div>
<svg style="left:3378px;top:1974px" width="30" height="30" viewBox="0 0 30 30"><path d="M8 8 H27 V27 H8Z" fill="none" stroke="#1b5a78" stroke-width="2.4"/><rect x="2" y="2" width="9" height="9" fill="#fff" stroke="#27a5ad" stroke-width="2"/></svg>
<svg style="left:3414px;top:1976px" width="15" height="10"><path d="M1 9 l6.5 -7 l6.5 7" fill="none" stroke="#555" stroke-width="1.6"/></svg>
<div class="a" style="left:3443px;top:1970px;width:39px;height:38px;background:#c8e6e0;border:2px solid #5aa59a"></div>
<svg style="left:3447px;top:1974px" width="30" height="30" viewBox="0 0 30 30"><path d="M2 28 H28 M4 27 L26 4" stroke="#1b5a78" stroke-width="2" fill="none"/><circle cx="16" cy="15" r="3.5" fill="none" stroke="#1b5a78" stroke-width="2"/></svg>
<div class="a" style="left:3494px;top:1970px;width:39px;height:38px;background:#c8e6e0;border:2px solid #5aa59a"></div>
<svg style="left:3498px;top:1974px" width="30" height="30" viewBox="0 0 30 30"><path d="M4 2 Q6 22 22 28 M2 28 H28" stroke="#1b5a78" stroke-width="2" fill="none"/><circle cx="20" cy="26" r="2" fill="#27a5ad"/></svg>
<svg style="left:3549px;top:1974px" width="31" height="32" viewBox="0 0 31 32"><path d="M6 2 V28 H30 M6 18 H14 V28" fill="none" stroke="#1b5a78" stroke-width="2.4"/></svg>
<svg style="left:3600px;top:1974px" width="31" height="31" viewBox="0 0 31 31"><path d="M2 2 H29 V29 H2Z M9 2 V29 M16 2 V29 M23 2 V29 M2 9 H29 M2 16 H29 M2 23 H29" fill="none" stroke="#1b5a78" stroke-width="2.4"/></svg>
<svg style="left:3648px;top:1972px" width="36" height="34" viewBox="0 0 36 34"><path d="M18 2 L34 17 L18 32 L2 17Z" fill="none" stroke="#9ab" stroke-width="1.2"/><circle cx="18" cy="17" r="5" fill="#fff" stroke="#1b5a78" stroke-width="2.6"/><path d="M2 17 l7 -5 v10z M34 17 l-7 -5 v10z" fill="#1b5a78"/><path d="M9 17 H13 M23 17 H27" stroke="#1b5a78" stroke-width="2"/></svg>
<svg style="left:3700px;top:1973px" width="31" height="32" viewBox="0 0 31 32"><path d="M15.5 3 l3 0 l1 4 l3.5 2 l4 -1.5 l2 3 l-3 3 v4 l3 3 l-2 3 l-4 -1.5 l-3.5 2 l-1 4 h-6 l-1 -4 l-3.5 -2 l-4 1.5 l-2 -3 l3 -3 v-4 l-3 -3 l2 -3 l4 1.5 l3.5 -2 l1 -4z" fill="none" stroke="#27a5ad" stroke-width="2.4" stroke-linejoin="round"/><circle cx="15.5" cy="16" r="5" fill="none" stroke="#27a5ad" stroke-width="2.4"/></svg>


<div class="box" style="left:780px;top:135px;width:640px;height:165px"></div>
<div class="bl" style="left:816px;top:158px">导出<span style="font-size:50px;letter-spacing:-3px">dwg</span>图纸时，参照</div>
<div class="bl" style="left:816px;top:223px">平面同步导出</div>
<div class="box" style="left:142px;top:940px;width:537px;height:165px"></div>
<div class="bl" style="left:177px;top:961px">生成图纸时，参照</div>
<div class="bl" style="left:177px;top:1027px">平面同步出图</div>
<div class="box" style="left:1696px;top:653px;width:536px;height:165px"></div>
<div class="bl" style="left:1731px;top:675px">视图参照新增建筑、</div>
<div class="bl" style="left:1731px;top:741px">结构平面视图</div>
<div class="badge" style="left:717px;top:136px">3</div>
<div class="badge" style="left:412px;top:893px">2</div>
<div class="badge" style="left:1645px;top:642px">1</div>
</body></html>
